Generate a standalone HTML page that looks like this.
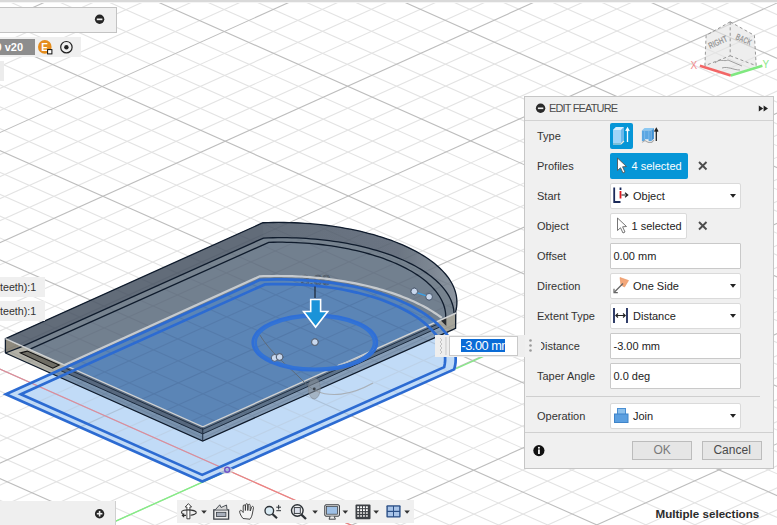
<!DOCTYPE html><html><head><meta charset="utf-8"><style>
html,body{margin:0;padding:0;width:777px;height:525px;overflow:hidden;background:#fff;font-family:"Liberation Sans",sans-serif;}
.abs{position:absolute}
.lbl{position:absolute;left:537px;font-size:11px;color:#333;white-space:nowrap;line-height:12px}
.txt{font-size:11px;color:#222;white-space:nowrap;line-height:12px}
.box{position:absolute;left:609.5px;width:131.8px;background:#fff;border:1px solid #dadada;border-radius:2px;box-sizing:border-box}
.inp{border-color:#c9c9c9;border-radius:1px}
.btn{position:absolute;top:441px;height:18.5px;box-sizing:border-box;background:#e6e6e6;border:1px solid #bcbcbc;font-size:12px;color:#7a7a7a;text-align:center;line-height:16px}
</style></head><body><svg width="777" height="525" viewBox="0 0 777 525" style="position:absolute;left:0;top:0"><g stroke="#e3e3e3" stroke-width="1.1"><line x1="-177.47" y1="-999.65" x2="3271.97" y2="532.24"/><line x1="-201.91" y1="-988.64" x2="3247.53" y2="543.25"/><line x1="-226.36" y1="-977.63" x2="3223.08" y2="554.26"/><line x1="-250.80" y1="-966.62" x2="3198.63" y2="565.27"/><line x1="-299.69" y1="-944.60" x2="3149.74" y2="587.29"/><line x1="-324.14" y1="-933.59" x2="3125.30" y2="598.30"/><line x1="-348.59" y1="-922.58" x2="3100.85" y2="609.31"/><line x1="-373.03" y1="-911.58" x2="3076.41" y2="620.31"/><line x1="-421.92" y1="-889.56" x2="3027.52" y2="642.33"/><line x1="-446.37" y1="-878.55" x2="3003.07" y2="653.34"/><line x1="-470.81" y1="-867.54" x2="2978.63" y2="664.35"/><line x1="-495.26" y1="-856.53" x2="2954.18" y2="675.36"/><line x1="-544.15" y1="-834.51" x2="2905.29" y2="697.38"/><line x1="-568.59" y1="-823.51" x2="2880.84" y2="708.38"/><line x1="-593.04" y1="-812.50" x2="2856.40" y2="719.39"/><line x1="-617.49" y1="-801.49" x2="2831.95" y2="730.40"/><line x1="-666.38" y1="-779.47" x2="2783.06" y2="752.42"/><line x1="-690.82" y1="-768.46" x2="2758.62" y2="763.43"/><line x1="-715.27" y1="-757.45" x2="2734.17" y2="774.44"/><line x1="-739.71" y1="-746.44" x2="2709.73" y2="785.45"/><line x1="-788.60" y1="-724.43" x2="2660.84" y2="807.46"/><line x1="-813.05" y1="-713.42" x2="2636.39" y2="818.47"/><line x1="-837.49" y1="-702.41" x2="2611.94" y2="829.48"/><line x1="-861.94" y1="-691.40" x2="2587.50" y2="840.49"/><line x1="-910.83" y1="-669.38" x2="2538.61" y2="862.51"/><line x1="-935.28" y1="-658.37" x2="2514.16" y2="873.52"/><line x1="-959.72" y1="-647.36" x2="2489.72" y2="884.53"/><line x1="-984.17" y1="-636.36" x2="2465.27" y2="895.53"/><line x1="-1033.06" y1="-614.34" x2="2416.38" y2="917.55"/><line x1="-1057.50" y1="-603.33" x2="2391.94" y2="928.56"/><line x1="-1081.95" y1="-592.32" x2="2367.49" y2="939.57"/><line x1="-1106.39" y1="-581.31" x2="2343.04" y2="950.58"/><line x1="-1155.28" y1="-559.29" x2="2294.15" y2="972.60"/><line x1="-1179.73" y1="-548.28" x2="2269.71" y2="983.61"/><line x1="-1204.18" y1="-537.28" x2="2245.26" y2="994.61"/><line x1="-1228.62" y1="-526.27" x2="2220.82" y2="1005.62"/><line x1="-1277.51" y1="-504.25" x2="2171.93" y2="1027.64"/><line x1="-1301.96" y1="-493.24" x2="2147.48" y2="1038.65"/><line x1="-1326.40" y1="-482.23" x2="2123.04" y2="1049.66"/><line x1="-1350.85" y1="-471.22" x2="2098.59" y2="1060.67"/><line x1="-1399.74" y1="-449.21" x2="2049.70" y2="1082.68"/><line x1="-1424.18" y1="-438.20" x2="2025.25" y2="1093.69"/><line x1="-1448.63" y1="-427.19" x2="2000.81" y2="1104.70"/><line x1="-1473.08" y1="-416.18" x2="1976.36" y2="1115.71"/><line x1="-1521.97" y1="-394.16" x2="1927.47" y2="1137.73"/><line x1="-1546.41" y1="-383.15" x2="1903.03" y2="1148.74"/><line x1="-1570.86" y1="-372.14" x2="1878.58" y2="1159.75"/><line x1="-1595.30" y1="-361.13" x2="1854.14" y2="1170.75"/><line x1="-1644.19" y1="-339.12" x2="1805.25" y2="1192.77"/><line x1="-1668.64" y1="-328.11" x2="1780.80" y2="1203.78"/><line x1="-1693.08" y1="-317.10" x2="1756.35" y2="1214.79"/><line x1="-1717.53" y1="-306.09" x2="1731.91" y2="1225.80"/><line x1="-1766.42" y1="-284.07" x2="1683.02" y2="1247.82"/><line x1="-1790.87" y1="-273.06" x2="1658.57" y2="1258.83"/><line x1="-1815.31" y1="-262.06" x2="1634.13" y2="1269.83"/><line x1="-1839.76" y1="-251.05" x2="1609.68" y2="1280.84"/><line x1="-1888.65" y1="-229.03" x2="1560.79" y2="1302.86"/><line x1="-1913.09" y1="-218.02" x2="1536.35" y2="1313.87"/><line x1="-1937.54" y1="-207.01" x2="1511.90" y2="1324.88"/><line x1="-1961.98" y1="-196.00" x2="1487.45" y2="1335.89"/><line x1="-2010.87" y1="-173.98" x2="1438.56" y2="1357.90"/><line x1="-2035.32" y1="-162.98" x2="1414.12" y2="1368.91"/><line x1="-2059.77" y1="-151.97" x2="1389.67" y2="1379.92"/><line x1="-2084.21" y1="-140.96" x2="1365.23" y2="1390.93"/><line x1="-2133.10" y1="-118.94" x2="1316.34" y2="1412.95"/><line x1="-2157.55" y1="-107.93" x2="1291.89" y2="1423.96"/><line x1="-2181.99" y1="-96.92" x2="1267.45" y2="1434.97"/><line x1="-2206.44" y1="-85.91" x2="1243.00" y2="1445.98"/><line x1="-2255.33" y1="-63.90" x2="1194.11" y2="1467.99"/><line x1="-2279.77" y1="-52.89" x2="1169.66" y2="1479.00"/><line x1="-2304.22" y1="-41.88" x2="1145.22" y2="1490.01"/><line x1="-2328.66" y1="-30.87" x2="1120.77" y2="1501.02"/><line x1="-2377.56" y1="-8.85" x2="1071.88" y2="1523.04"/><line x1="-2402.00" y1="2.16" x2="1047.44" y2="1534.05"/><line x1="-2426.45" y1="13.17" x2="1022.99" y2="1545.05"/><line x1="-2450.89" y1="24.17" x2="998.55" y2="1556.06"/><line x1="-2499.78" y1="46.19" x2="949.66" y2="1578.08"/><line x1="-2524.23" y1="57.20" x2="925.21" y2="1589.09"/><line x1="-2548.67" y1="68.21" x2="900.76" y2="1600.10"/><line x1="-2573.12" y1="79.22" x2="876.32" y2="1611.11"/><line x1="853.30" y1="-1001.05" x2="-2569.06" y2="540.19"/><line x1="877.94" y1="-990.11" x2="-2544.42" y2="551.13"/><line x1="902.58" y1="-979.16" x2="-2519.78" y2="562.07"/><line x1="927.22" y1="-968.22" x2="-2495.14" y2="573.01"/><line x1="976.50" y1="-946.34" x2="-2445.86" y2="594.90"/><line x1="1001.14" y1="-935.40" x2="-2421.22" y2="605.84"/><line x1="1025.77" y1="-924.45" x2="-2396.59" y2="616.78"/><line x1="1050.41" y1="-913.51" x2="-2371.95" y2="627.72"/><line x1="1099.69" y1="-891.63" x2="-2322.67" y2="649.61"/><line x1="1124.33" y1="-880.69" x2="-2298.03" y2="660.55"/><line x1="1148.97" y1="-869.74" x2="-2273.39" y2="671.49"/><line x1="1173.61" y1="-858.80" x2="-2248.75" y2="682.43"/><line x1="1222.88" y1="-836.92" x2="-2199.47" y2="704.32"/><line x1="1247.52" y1="-825.97" x2="-2174.84" y2="715.26"/><line x1="1272.16" y1="-815.03" x2="-2150.20" y2="726.20"/><line x1="1296.80" y1="-804.09" x2="-2125.56" y2="737.14"/><line x1="1346.08" y1="-782.21" x2="-2076.28" y2="759.03"/><line x1="1370.72" y1="-771.26" x2="-2051.64" y2="769.97"/><line x1="1395.36" y1="-760.32" x2="-2027.00" y2="780.91"/><line x1="1420.00" y1="-749.38" x2="-2002.36" y2="791.85"/><line x1="1469.27" y1="-727.50" x2="-1953.09" y2="813.74"/><line x1="1493.91" y1="-716.55" x2="-1928.45" y2="824.68"/><line x1="1518.55" y1="-705.61" x2="-1903.81" y2="835.62"/><line x1="1543.19" y1="-694.67" x2="-1879.17" y2="846.56"/><line x1="1592.47" y1="-672.79" x2="-1829.89" y2="868.45"/><line x1="1617.11" y1="-661.84" x2="-1805.25" y2="879.39"/><line x1="1641.75" y1="-650.90" x2="-1780.61" y2="890.33"/><line x1="1666.38" y1="-639.96" x2="-1755.98" y2="901.28"/><line x1="1715.66" y1="-618.08" x2="-1706.70" y2="923.16"/><line x1="1740.30" y1="-607.13" x2="-1682.06" y2="934.10"/><line x1="1764.94" y1="-596.19" x2="-1657.42" y2="945.04"/><line x1="1789.58" y1="-585.25" x2="-1632.78" y2="955.99"/><line x1="1838.86" y1="-563.37" x2="-1583.50" y2="977.87"/><line x1="1863.49" y1="-552.42" x2="-1558.86" y2="988.81"/><line x1="1888.13" y1="-541.48" x2="-1534.23" y2="999.75"/><line x1="1912.77" y1="-530.54" x2="-1509.59" y2="1010.70"/><line x1="1962.05" y1="-508.65" x2="-1460.31" y2="1032.58"/><line x1="1986.69" y1="-497.71" x2="-1435.67" y2="1043.52"/><line x1="2011.33" y1="-486.77" x2="-1411.03" y2="1054.46"/><line x1="2035.97" y1="-475.83" x2="-1386.39" y2="1065.41"/><line x1="2085.24" y1="-453.94" x2="-1337.12" y2="1087.29"/><line x1="2109.88" y1="-443.00" x2="-1312.48" y2="1098.23"/><line x1="2134.52" y1="-432.06" x2="-1287.84" y2="1109.17"/><line x1="2159.16" y1="-421.12" x2="-1263.20" y2="1120.12"/><line x1="2208.44" y1="-399.23" x2="-1213.92" y2="1142.00"/><line x1="2233.08" y1="-388.29" x2="-1189.28" y2="1152.94"/><line x1="2257.72" y1="-377.35" x2="-1164.64" y2="1163.88"/><line x1="2282.36" y1="-366.41" x2="-1140.00" y2="1174.83"/><line x1="2331.63" y1="-344.52" x2="-1090.73" y2="1196.71"/><line x1="2356.27" y1="-333.58" x2="-1066.09" y2="1207.65"/><line x1="2380.91" y1="-322.64" x2="-1041.45" y2="1218.60"/><line x1="2405.55" y1="-311.70" x2="-1016.81" y2="1229.54"/><line x1="2454.83" y1="-289.81" x2="-967.53" y2="1251.42"/><line x1="2479.47" y1="-278.87" x2="-942.89" y2="1262.36"/><line x1="2504.10" y1="-267.93" x2="-918.25" y2="1273.31"/><line x1="2528.74" y1="-256.99" x2="-893.62" y2="1284.25"/><line x1="2578.02" y1="-235.10" x2="-844.34" y2="1306.13"/><line x1="2602.66" y1="-224.16" x2="-819.70" y2="1317.07"/><line x1="2627.30" y1="-213.22" x2="-795.06" y2="1328.02"/><line x1="2651.94" y1="-202.28" x2="-770.42" y2="1338.96"/><line x1="2701.22" y1="-180.39" x2="-721.14" y2="1360.84"/><line x1="2725.85" y1="-169.45" x2="-696.51" y2="1371.78"/><line x1="2750.49" y1="-158.51" x2="-671.87" y2="1382.73"/><line x1="2775.13" y1="-147.57" x2="-647.23" y2="1393.67"/><line x1="2824.41" y1="-125.68" x2="-597.95" y2="1415.55"/><line x1="2849.05" y1="-114.74" x2="-573.31" y2="1426.49"/><line x1="2873.69" y1="-103.80" x2="-548.67" y2="1437.44"/><line x1="2898.33" y1="-92.86" x2="-524.03" y2="1448.38"/><line x1="2947.60" y1="-70.97" x2="-474.76" y2="1470.26"/><line x1="2972.24" y1="-60.03" x2="-450.12" y2="1481.20"/><line x1="2996.88" y1="-49.09" x2="-425.48" y2="1492.15"/><line x1="3021.52" y1="-38.15" x2="-400.84" y2="1503.09"/><line x1="3070.80" y1="-16.26" x2="-351.56" y2="1524.97"/><line x1="3095.44" y1="-5.32" x2="-326.92" y2="1535.92"/><line x1="3120.08" y1="5.62" x2="-302.28" y2="1546.86"/><line x1="3144.71" y1="16.56" x2="-277.64" y2="1557.80"/><line x1="3193.99" y1="38.45" x2="-228.37" y2="1579.68"/><line x1="3218.63" y1="49.39" x2="-203.73" y2="1590.63"/><line x1="3243.27" y1="60.33" x2="-179.09" y2="1601.57"/><line x1="3267.91" y1="71.27" x2="-154.45" y2="1612.51"/></g><g stroke="#bdbdbd" stroke-width="1.1"><line x1="-153.02" y1="-1010.66" x2="3296.42" y2="521.23"/><line x1="-275.25" y1="-955.61" x2="3174.19" y2="576.28"/><line x1="-397.48" y1="-900.57" x2="3051.96" y2="631.32"/><line x1="-519.70" y1="-845.52" x2="2929.74" y2="686.37"/><line x1="-641.93" y1="-790.48" x2="2807.51" y2="741.41"/><line x1="-764.16" y1="-735.43" x2="2685.28" y2="796.46"/><line x1="-886.38" y1="-680.39" x2="2563.05" y2="851.50"/><line x1="-1008.61" y1="-625.35" x2="2440.83" y2="906.54"/><line x1="-1130.84" y1="-570.30" x2="2318.60" y2="961.59"/><line x1="-1253.07" y1="-515.26" x2="2196.37" y2="1016.63"/><line x1="-1375.29" y1="-460.21" x2="2074.15" y2="1071.68"/><line x1="-1497.52" y1="-405.17" x2="1951.92" y2="1126.72"/><line x1="-1619.75" y1="-350.13" x2="1829.69" y2="1181.76"/><line x1="-1741.97" y1="-295.08" x2="1707.46" y2="1236.81"/><line x1="-1864.20" y1="-240.04" x2="1585.24" y2="1291.85"/><line x1="-1986.43" y1="-184.99" x2="1463.01" y2="1346.90"/><line x1="-2108.66" y1="-129.95" x2="1340.78" y2="1401.94"/><line x1="-2230.88" y1="-74.91" x2="1218.56" y2="1456.98"/><line x1="-2353.11" y1="-19.86" x2="1096.33" y2="1512.03"/><line x1="-2475.34" y1="35.18" x2="974.10" y2="1567.07"/><line x1="828.66" y1="-1011.99" x2="-2593.70" y2="529.24"/><line x1="951.86" y1="-957.28" x2="-2470.50" y2="583.95"/><line x1="1075.05" y1="-902.57" x2="-2347.31" y2="638.67"/><line x1="1198.25" y1="-847.86" x2="-2224.11" y2="693.38"/><line x1="1321.44" y1="-793.15" x2="-2100.92" y2="748.09"/><line x1="1444.63" y1="-738.44" x2="-1977.73" y2="802.80"/><line x1="1567.83" y1="-683.73" x2="-1854.53" y2="857.51"/><line x1="1691.02" y1="-629.02" x2="-1731.34" y2="912.22"/><line x1="1814.22" y1="-574.31" x2="-1608.14" y2="966.93"/><line x1="1937.41" y1="-519.60" x2="-1484.95" y2="1021.64"/><line x1="2060.61" y1="-464.89" x2="-1361.75" y2="1076.35"/><line x1="2183.80" y1="-410.18" x2="-1238.56" y2="1131.06"/><line x1="2306.99" y1="-355.47" x2="-1115.37" y2="1185.77"/><line x1="2430.19" y1="-300.76" x2="-992.17" y2="1240.48"/><line x1="2553.38" y1="-246.05" x2="-868.98" y2="1295.19"/><line x1="2676.58" y1="-191.33" x2="-745.78" y2="1349.90"/><line x1="2799.77" y1="-136.62" x2="-622.59" y2="1404.61"/><line x1="2922.97" y1="-81.91" x2="-499.39" y2="1459.32"/><line x1="3046.16" y1="-27.20" x2="-376.20" y2="1514.03"/><line x1="3169.35" y1="27.51" x2="-253.01" y2="1568.74"/></g><path d="M5.88,394.33 L202.25,481.54 L454.19,369.37 L455.06,365.83 L455.56,362.28 L455.70,358.72 L455.48,355.15 L454.90,351.59 L453.95,348.05 L452.65,344.53 L450.99,341.03 L448.98,337.57 L446.62,334.16 L443.92,330.77 L440.88,327.36 L437.50,324.02 L433.81,320.75 L429.79,317.56 L425.47,314.47 L420.85,311.47 L415.93,308.57 L410.74,305.78 L405.27,303.10 L399.55,300.55 L393.59,298.12 L387.38,295.82 L380.96,293.65 L374.33,291.63 L367.51,289.75 L360.50,288.04 L353.33,286.49 L346.01,285.07 L338.55,283.81 L330.98,282.71 L323.30,281.75 L315.53,280.96 L307.68,280.32 L299.79,279.84 L291.85,279.53 L283.89,279.37 L275.92,279.38 L267.96,279.55 L260.02,279.88 Z" fill="#c1dbf7"/><clipPath id="cD"><path d="M5.88,394.33 L202.25,481.54 L454.19,369.37 L455.06,365.83 L455.56,362.28 L455.70,358.72 L455.48,355.15 L454.90,351.59 L453.95,348.05 L452.65,344.53 L450.99,341.03 L448.98,337.57 L446.62,334.16 L443.92,330.77 L440.88,327.36 L437.50,324.02 L433.81,320.75 L429.79,317.56 L425.47,314.47 L420.85,311.47 L415.93,308.57 L410.74,305.78 L405.27,303.10 L399.55,300.55 L393.59,298.12 L387.38,295.82 L380.96,293.65 L374.33,291.63 L367.51,289.75 L360.50,288.04 L353.33,286.49 L346.01,285.07 L338.55,283.81 L330.98,282.71 L323.30,281.75 L315.53,280.96 L307.68,280.32 L299.79,279.84 L291.85,279.53 L283.89,279.37 L275.92,279.38 L267.96,279.55 L260.02,279.88 Z"/></clipPath><g clip-path="url(#cD)" opacity="0.5"><g stroke="#b8c8da" stroke-width="1.1"><line x1="-177.47" y1="-999.65" x2="3271.97" y2="532.24"/><line x1="-201.91" y1="-988.64" x2="3247.53" y2="543.25"/><line x1="-226.36" y1="-977.63" x2="3223.08" y2="554.26"/><line x1="-250.80" y1="-966.62" x2="3198.63" y2="565.27"/><line x1="-299.69" y1="-944.60" x2="3149.74" y2="587.29"/><line x1="-324.14" y1="-933.59" x2="3125.30" y2="598.30"/><line x1="-348.59" y1="-922.58" x2="3100.85" y2="609.31"/><line x1="-373.03" y1="-911.58" x2="3076.41" y2="620.31"/><line x1="-421.92" y1="-889.56" x2="3027.52" y2="642.33"/><line x1="-446.37" y1="-878.55" x2="3003.07" y2="653.34"/><line x1="-470.81" y1="-867.54" x2="2978.63" y2="664.35"/><line x1="-495.26" y1="-856.53" x2="2954.18" y2="675.36"/><line x1="-544.15" y1="-834.51" x2="2905.29" y2="697.38"/><line x1="-568.59" y1="-823.51" x2="2880.84" y2="708.38"/><line x1="-593.04" y1="-812.50" x2="2856.40" y2="719.39"/><line x1="-617.49" y1="-801.49" x2="2831.95" y2="730.40"/><line x1="-666.38" y1="-779.47" x2="2783.06" y2="752.42"/><line x1="-690.82" y1="-768.46" x2="2758.62" y2="763.43"/><line x1="-715.27" y1="-757.45" x2="2734.17" y2="774.44"/><line x1="-739.71" y1="-746.44" x2="2709.73" y2="785.45"/><line x1="-788.60" y1="-724.43" x2="2660.84" y2="807.46"/><line x1="-813.05" y1="-713.42" x2="2636.39" y2="818.47"/><line x1="-837.49" y1="-702.41" x2="2611.94" y2="829.48"/><line x1="-861.94" y1="-691.40" x2="2587.50" y2="840.49"/><line x1="-910.83" y1="-669.38" x2="2538.61" y2="862.51"/><line x1="-935.28" y1="-658.37" x2="2514.16" y2="873.52"/><line x1="-959.72" y1="-647.36" x2="2489.72" y2="884.53"/><line x1="-984.17" y1="-636.36" x2="2465.27" y2="895.53"/><line x1="-1033.06" y1="-614.34" x2="2416.38" y2="917.55"/><line x1="-1057.50" y1="-603.33" x2="2391.94" y2="928.56"/><line x1="-1081.95" y1="-592.32" x2="2367.49" y2="939.57"/><line x1="-1106.39" y1="-581.31" x2="2343.04" y2="950.58"/><line x1="-1155.28" y1="-559.29" x2="2294.15" y2="972.60"/><line x1="-1179.73" y1="-548.28" x2="2269.71" y2="983.61"/><line x1="-1204.18" y1="-537.28" x2="2245.26" y2="994.61"/><line x1="-1228.62" y1="-526.27" x2="2220.82" y2="1005.62"/><line x1="-1277.51" y1="-504.25" x2="2171.93" y2="1027.64"/><line x1="-1301.96" y1="-493.24" x2="2147.48" y2="1038.65"/><line x1="-1326.40" y1="-482.23" x2="2123.04" y2="1049.66"/><line x1="-1350.85" y1="-471.22" x2="2098.59" y2="1060.67"/><line x1="-1399.74" y1="-449.21" x2="2049.70" y2="1082.68"/><line x1="-1424.18" y1="-438.20" x2="2025.25" y2="1093.69"/><line x1="-1448.63" y1="-427.19" x2="2000.81" y2="1104.70"/><line x1="-1473.08" y1="-416.18" x2="1976.36" y2="1115.71"/><line x1="-1521.97" y1="-394.16" x2="1927.47" y2="1137.73"/><line x1="-1546.41" y1="-383.15" x2="1903.03" y2="1148.74"/><line x1="-1570.86" y1="-372.14" x2="1878.58" y2="1159.75"/><line x1="-1595.30" y1="-361.13" x2="1854.14" y2="1170.75"/><line x1="-1644.19" y1="-339.12" x2="1805.25" y2="1192.77"/><line x1="-1668.64" y1="-328.11" x2="1780.80" y2="1203.78"/><line x1="-1693.08" y1="-317.10" x2="1756.35" y2="1214.79"/><line x1="-1717.53" y1="-306.09" x2="1731.91" y2="1225.80"/><line x1="-1766.42" y1="-284.07" x2="1683.02" y2="1247.82"/><line x1="-1790.87" y1="-273.06" x2="1658.57" y2="1258.83"/><line x1="-1815.31" y1="-262.06" x2="1634.13" y2="1269.83"/><line x1="-1839.76" y1="-251.05" x2="1609.68" y2="1280.84"/><line x1="-1888.65" y1="-229.03" x2="1560.79" y2="1302.86"/><line x1="-1913.09" y1="-218.02" x2="1536.35" y2="1313.87"/><line x1="-1937.54" y1="-207.01" x2="1511.90" y2="1324.88"/><line x1="-1961.98" y1="-196.00" x2="1487.45" y2="1335.89"/><line x1="-2010.87" y1="-173.98" x2="1438.56" y2="1357.90"/><line x1="-2035.32" y1="-162.98" x2="1414.12" y2="1368.91"/><line x1="-2059.77" y1="-151.97" x2="1389.67" y2="1379.92"/><line x1="-2084.21" y1="-140.96" x2="1365.23" y2="1390.93"/><line x1="-2133.10" y1="-118.94" x2="1316.34" y2="1412.95"/><line x1="-2157.55" y1="-107.93" x2="1291.89" y2="1423.96"/><line x1="-2181.99" y1="-96.92" x2="1267.45" y2="1434.97"/><line x1="-2206.44" y1="-85.91" x2="1243.00" y2="1445.98"/><line x1="-2255.33" y1="-63.90" x2="1194.11" y2="1467.99"/><line x1="-2279.77" y1="-52.89" x2="1169.66" y2="1479.00"/><line x1="-2304.22" y1="-41.88" x2="1145.22" y2="1490.01"/><line x1="-2328.66" y1="-30.87" x2="1120.77" y2="1501.02"/><line x1="-2377.56" y1="-8.85" x2="1071.88" y2="1523.04"/><line x1="-2402.00" y1="2.16" x2="1047.44" y2="1534.05"/><line x1="-2426.45" y1="13.17" x2="1022.99" y2="1545.05"/><line x1="-2450.89" y1="24.17" x2="998.55" y2="1556.06"/><line x1="-2499.78" y1="46.19" x2="949.66" y2="1578.08"/><line x1="-2524.23" y1="57.20" x2="925.21" y2="1589.09"/><line x1="-2548.67" y1="68.21" x2="900.76" y2="1600.10"/><line x1="-2573.12" y1="79.22" x2="876.32" y2="1611.11"/><line x1="853.30" y1="-1001.05" x2="-2569.06" y2="540.19"/><line x1="877.94" y1="-990.11" x2="-2544.42" y2="551.13"/><line x1="902.58" y1="-979.16" x2="-2519.78" y2="562.07"/><line x1="927.22" y1="-968.22" x2="-2495.14" y2="573.01"/><line x1="976.50" y1="-946.34" x2="-2445.86" y2="594.90"/><line x1="1001.14" y1="-935.40" x2="-2421.22" y2="605.84"/><line x1="1025.77" y1="-924.45" x2="-2396.59" y2="616.78"/><line x1="1050.41" y1="-913.51" x2="-2371.95" y2="627.72"/><line x1="1099.69" y1="-891.63" x2="-2322.67" y2="649.61"/><line x1="1124.33" y1="-880.69" x2="-2298.03" y2="660.55"/><line x1="1148.97" y1="-869.74" x2="-2273.39" y2="671.49"/><line x1="1173.61" y1="-858.80" x2="-2248.75" y2="682.43"/><line x1="1222.88" y1="-836.92" x2="-2199.47" y2="704.32"/><line x1="1247.52" y1="-825.97" x2="-2174.84" y2="715.26"/><line x1="1272.16" y1="-815.03" x2="-2150.20" y2="726.20"/><line x1="1296.80" y1="-804.09" x2="-2125.56" y2="737.14"/><line x1="1346.08" y1="-782.21" x2="-2076.28" y2="759.03"/><line x1="1370.72" y1="-771.26" x2="-2051.64" y2="769.97"/><line x1="1395.36" y1="-760.32" x2="-2027.00" y2="780.91"/><line x1="1420.00" y1="-749.38" x2="-2002.36" y2="791.85"/><line x1="1469.27" y1="-727.50" x2="-1953.09" y2="813.74"/><line x1="1493.91" y1="-716.55" x2="-1928.45" y2="824.68"/><line x1="1518.55" y1="-705.61" x2="-1903.81" y2="835.62"/><line x1="1543.19" y1="-694.67" x2="-1879.17" y2="846.56"/><line x1="1592.47" y1="-672.79" x2="-1829.89" y2="868.45"/><line x1="1617.11" y1="-661.84" x2="-1805.25" y2="879.39"/><line x1="1641.75" y1="-650.90" x2="-1780.61" y2="890.33"/><line x1="1666.38" y1="-639.96" x2="-1755.98" y2="901.28"/><line x1="1715.66" y1="-618.08" x2="-1706.70" y2="923.16"/><line x1="1740.30" y1="-607.13" x2="-1682.06" y2="934.10"/><line x1="1764.94" y1="-596.19" x2="-1657.42" y2="945.04"/><line x1="1789.58" y1="-585.25" x2="-1632.78" y2="955.99"/><line x1="1838.86" y1="-563.37" x2="-1583.50" y2="977.87"/><line x1="1863.49" y1="-552.42" x2="-1558.86" y2="988.81"/><line x1="1888.13" y1="-541.48" x2="-1534.23" y2="999.75"/><line x1="1912.77" y1="-530.54" x2="-1509.59" y2="1010.70"/><line x1="1962.05" y1="-508.65" x2="-1460.31" y2="1032.58"/><line x1="1986.69" y1="-497.71" x2="-1435.67" y2="1043.52"/><line x1="2011.33" y1="-486.77" x2="-1411.03" y2="1054.46"/><line x1="2035.97" y1="-475.83" x2="-1386.39" y2="1065.41"/><line x1="2085.24" y1="-453.94" x2="-1337.12" y2="1087.29"/><line x1="2109.88" y1="-443.00" x2="-1312.48" y2="1098.23"/><line x1="2134.52" y1="-432.06" x2="-1287.84" y2="1109.17"/><line x1="2159.16" y1="-421.12" x2="-1263.20" y2="1120.12"/><line x1="2208.44" y1="-399.23" x2="-1213.92" y2="1142.00"/><line x1="2233.08" y1="-388.29" x2="-1189.28" y2="1152.94"/><line x1="2257.72" y1="-377.35" x2="-1164.64" y2="1163.88"/><line x1="2282.36" y1="-366.41" x2="-1140.00" y2="1174.83"/><line x1="2331.63" y1="-344.52" x2="-1090.73" y2="1196.71"/><line x1="2356.27" y1="-333.58" x2="-1066.09" y2="1207.65"/><line x1="2380.91" y1="-322.64" x2="-1041.45" y2="1218.60"/><line x1="2405.55" y1="-311.70" x2="-1016.81" y2="1229.54"/><line x1="2454.83" y1="-289.81" x2="-967.53" y2="1251.42"/><line x1="2479.47" y1="-278.87" x2="-942.89" y2="1262.36"/><line x1="2504.10" y1="-267.93" x2="-918.25" y2="1273.31"/><line x1="2528.74" y1="-256.99" x2="-893.62" y2="1284.25"/><line x1="2578.02" y1="-235.10" x2="-844.34" y2="1306.13"/><line x1="2602.66" y1="-224.16" x2="-819.70" y2="1317.07"/><line x1="2627.30" y1="-213.22" x2="-795.06" y2="1328.02"/><line x1="2651.94" y1="-202.28" x2="-770.42" y2="1338.96"/><line x1="2701.22" y1="-180.39" x2="-721.14" y2="1360.84"/><line x1="2725.85" y1="-169.45" x2="-696.51" y2="1371.78"/><line x1="2750.49" y1="-158.51" x2="-671.87" y2="1382.73"/><line x1="2775.13" y1="-147.57" x2="-647.23" y2="1393.67"/><line x1="2824.41" y1="-125.68" x2="-597.95" y2="1415.55"/><line x1="2849.05" y1="-114.74" x2="-573.31" y2="1426.49"/><line x1="2873.69" y1="-103.80" x2="-548.67" y2="1437.44"/><line x1="2898.33" y1="-92.86" x2="-524.03" y2="1448.38"/><line x1="2947.60" y1="-70.97" x2="-474.76" y2="1470.26"/><line x1="2972.24" y1="-60.03" x2="-450.12" y2="1481.20"/><line x1="2996.88" y1="-49.09" x2="-425.48" y2="1492.15"/><line x1="3021.52" y1="-38.15" x2="-400.84" y2="1503.09"/><line x1="3070.80" y1="-16.26" x2="-351.56" y2="1524.97"/><line x1="3095.44" y1="-5.32" x2="-326.92" y2="1535.92"/><line x1="3120.08" y1="5.62" x2="-302.28" y2="1546.86"/><line x1="3144.71" y1="16.56" x2="-277.64" y2="1557.80"/><line x1="3193.99" y1="38.45" x2="-228.37" y2="1579.68"/><line x1="3218.63" y1="49.39" x2="-203.73" y2="1590.63"/><line x1="3243.27" y1="60.33" x2="-179.09" y2="1601.57"/><line x1="3267.91" y1="71.27" x2="-154.45" y2="1612.51"/></g><g stroke="#9aaabc" stroke-width="1.1"><line x1="-153.02" y1="-1010.66" x2="3296.42" y2="521.23"/><line x1="-275.25" y1="-955.61" x2="3174.19" y2="576.28"/><line x1="-397.48" y1="-900.57" x2="3051.96" y2="631.32"/><line x1="-519.70" y1="-845.52" x2="2929.74" y2="686.37"/><line x1="-641.93" y1="-790.48" x2="2807.51" y2="741.41"/><line x1="-764.16" y1="-735.43" x2="2685.28" y2="796.46"/><line x1="-886.38" y1="-680.39" x2="2563.05" y2="851.50"/><line x1="-1008.61" y1="-625.35" x2="2440.83" y2="906.54"/><line x1="-1130.84" y1="-570.30" x2="2318.60" y2="961.59"/><line x1="-1253.07" y1="-515.26" x2="2196.37" y2="1016.63"/><line x1="-1375.29" y1="-460.21" x2="2074.15" y2="1071.68"/><line x1="-1497.52" y1="-405.17" x2="1951.92" y2="1126.72"/><line x1="-1619.75" y1="-350.13" x2="1829.69" y2="1181.76"/><line x1="-1741.97" y1="-295.08" x2="1707.46" y2="1236.81"/><line x1="-1864.20" y1="-240.04" x2="1585.24" y2="1291.85"/><line x1="-1986.43" y1="-184.99" x2="1463.01" y2="1346.90"/><line x1="-2108.66" y1="-129.95" x2="1340.78" y2="1401.94"/><line x1="-2230.88" y1="-74.91" x2="1218.56" y2="1456.98"/><line x1="-2353.11" y1="-19.86" x2="1096.33" y2="1512.03"/><line x1="-2475.34" y1="35.18" x2="974.10" y2="1567.07"/><line x1="828.66" y1="-1011.99" x2="-2593.70" y2="529.24"/><line x1="951.86" y1="-957.28" x2="-2470.50" y2="583.95"/><line x1="1075.05" y1="-902.57" x2="-2347.31" y2="638.67"/><line x1="1198.25" y1="-847.86" x2="-2224.11" y2="693.38"/><line x1="1321.44" y1="-793.15" x2="-2100.92" y2="748.09"/><line x1="1444.63" y1="-738.44" x2="-1977.73" y2="802.80"/><line x1="1567.83" y1="-683.73" x2="-1854.53" y2="857.51"/><line x1="1691.02" y1="-629.02" x2="-1731.34" y2="912.22"/><line x1="1814.22" y1="-574.31" x2="-1608.14" y2="966.93"/><line x1="1937.41" y1="-519.60" x2="-1484.95" y2="1021.64"/><line x1="2060.61" y1="-464.89" x2="-1361.75" y2="1076.35"/><line x1="2183.80" y1="-410.18" x2="-1238.56" y2="1131.06"/><line x1="2306.99" y1="-355.47" x2="-1115.37" y2="1185.77"/><line x1="2430.19" y1="-300.76" x2="-992.17" y2="1240.48"/><line x1="2553.38" y1="-246.05" x2="-868.98" y2="1295.19"/><line x1="2676.58" y1="-191.33" x2="-745.78" y2="1349.90"/><line x1="2799.77" y1="-136.62" x2="-622.59" y2="1404.61"/><line x1="2922.97" y1="-81.91" x2="-499.39" y2="1459.32"/><line x1="3046.16" y1="-27.20" x2="-376.20" y2="1514.03"/><line x1="3169.35" y1="27.51" x2="-253.01" y2="1568.74"/></g></g><line x1="228.17" y1="470.53" x2="1336.91" y2="962.92" stroke="#f08080" stroke-width="1.2"/><line x1="-387.81" y1="196.98" x2="228.17" y2="470.53" stroke="#e08a98" stroke-width="1.2"/><line x1="228.17" y1="470.53" x2="-260.74" y2="690.71" stroke="#84ee84" stroke-width="1.4"/><clipPath id="cS"><path d="M5.40,338.60 L262.87,222.76 L268.13,222.58 L273.39,222.48 L278.66,222.45 L283.94,222.48 L289.20,222.59 L294.46,222.77 L299.70,223.01 L304.93,223.33 L310.13,223.71 L315.30,224.16 L320.44,224.68 L325.55,225.27 L330.61,225.93 L335.63,226.65 L340.60,227.44 L345.52,228.29 L350.38,229.21 L355.17,230.19 L359.90,231.24 L364.55,232.34 L369.13,233.51 L373.64,234.74 L378.05,236.03 L382.39,237.37 L386.63,238.77 L390.77,240.23 L394.82,241.74 L398.77,243.31 L402.61,244.92 L406.35,246.59 L409.97,248.30 L413.48,250.06 L416.87,251.87 L420.13,253.72 L423.28,255.61 L426.30,257.55 L429.19,259.52 L431.94,261.53 L434.57,263.58 L437.05,265.66 L439.40,267.77 L441.61,269.91 L443.68,272.08 L445.60,274.27 L447.37,276.49 L449.00,278.74 L450.48,281.00 L451.81,283.28 L452.98,285.58 L454.01,287.89 L454.88,290.22 L455.60,292.56 L456.16,294.90 L456.56,297.25 L456.82,299.60 L456.91,301.96 L456.85,304.32 L456.64,306.67 L456.26,309.03 L455.74,311.37 L455.60,328.40 L449.00,331.30 L202.70,441.00 L5.40,353.00 Z"/></clipPath><g><path d="M5.40,338.60 L262.87,222.76 L268.13,222.58 L273.39,222.48 L278.66,222.45 L283.94,222.48 L289.20,222.59 L294.46,222.77 L299.70,223.01 L304.93,223.33 L310.13,223.71 L315.30,224.16 L320.44,224.68 L325.55,225.27 L330.61,225.93 L335.63,226.65 L340.60,227.44 L345.52,228.29 L350.38,229.21 L355.17,230.19 L359.90,231.24 L364.55,232.34 L369.13,233.51 L373.64,234.74 L378.05,236.03 L382.39,237.37 L386.63,238.77 L390.77,240.23 L394.82,241.74 L398.77,243.31 L402.61,244.92 L406.35,246.59 L409.97,248.30 L413.48,250.06 L416.87,251.87 L420.13,253.72 L423.28,255.61 L426.30,257.55 L429.19,259.52 L431.94,261.53 L434.57,263.58 L437.05,265.66 L439.40,267.77 L441.61,269.91 L443.68,272.08 L445.60,274.27 L447.37,276.49 L449.00,278.74 L450.48,281.00 L451.81,283.28 L452.98,285.58 L454.01,287.89 L454.88,290.22 L455.60,292.56 L456.16,294.90 L456.56,297.25 L456.82,299.60 L456.91,301.96 L456.85,304.32 L456.64,306.67 L456.26,309.03 L455.74,311.37 L455.60,328.40 L449.00,331.30 L202.70,441.00 L5.40,353.00 Z" fill="#73808f"/><path d="M5.40,338.60 L262.87,222.76 L268.13,222.58 L273.39,222.48 L278.66,222.45 L283.94,222.48 L289.20,222.59 L294.46,222.77 L299.70,223.01 L304.93,223.33 L310.13,223.71 L315.30,224.16 L320.44,224.68 L325.55,225.27 L330.61,225.93 L335.63,226.65 L340.60,227.44 L345.52,228.29 L350.38,229.21 L355.17,230.19 L359.90,231.24 L364.55,232.34 L369.13,233.51 L373.64,234.74 L378.05,236.03 L382.39,237.37 L386.63,238.77 L390.77,240.23 L394.82,241.74 L398.77,243.31 L402.61,244.92 L406.35,246.59 L409.97,248.30 L413.48,250.06 L416.87,251.87 L420.13,253.72 L423.28,255.61 L426.30,257.55 L429.19,259.52 L431.94,261.53 L434.57,263.58 L437.05,265.66 L439.40,267.77 L441.61,269.91 L443.68,272.08 L445.60,274.27 L447.37,276.49 L449.00,278.74 L450.48,281.00 L451.81,283.28 L452.98,285.58 L454.01,287.89 L454.88,290.22 L455.60,292.56 L456.16,294.90 L456.56,297.25 L456.82,299.60 L456.91,301.96 L456.85,304.32 L456.64,306.67 L456.26,309.03 L455.74,311.37 L454.03,313.00 L453.86,310.88 L453.55,308.76 L453.11,306.64 L452.54,304.53 L451.84,302.43 L451.01,300.34 L450.06,298.26 L448.97,296.19 L447.76,294.13 L446.42,292.10 L444.96,290.07 L443.38,288.07 L441.67,286.09 L439.84,284.13 L437.89,282.19 L435.82,280.28 L433.63,278.39 L431.33,276.53 L428.91,274.70 L426.38,272.90 L423.75,271.13 L421.00,269.40 L418.15,267.70 L415.20,266.03 L412.14,264.41 L408.99,262.82 L405.74,261.27 L402.39,259.76 L398.95,258.29 L395.43,256.86 L391.81,255.48 L388.12,254.15 L384.34,252.86 L380.49,251.62 L376.56,250.42 L372.55,249.27 L368.48,248.18 L364.34,247.13 L360.15,246.14 L355.89,245.20 L351.57,244.31 L347.20,243.47 L342.78,242.69 L338.32,241.96 L333.81,241.29 L329.26,240.68 L324.68,240.12 L320.06,239.61 L315.42,239.17 L310.75,238.78 L306.05,238.45 L301.34,238.17 L296.62,237.96 L291.88,237.80 L287.13,237.71 L282.38,237.67 L277.63,237.69 L272.89,237.76 L268.15,237.90 L263.42,238.09 L21.30,346.90 Z" fill="#626c79"/><linearGradient id="gA" gradientUnits="userSpaceOnUse" x1="262" y1="0" x2="457" y2="0"><stop offset="0" stop-color="#66707d"/><stop offset="0.7" stop-color="#6b7582"/><stop offset="1" stop-color="#8d96a1"/></linearGradient><path d="M262.87,222.76 L268.13,222.58 L273.39,222.48 L278.66,222.45 L283.94,222.48 L289.20,222.59 L294.46,222.77 L299.70,223.01 L304.93,223.33 L310.13,223.71 L315.30,224.16 L320.44,224.68 L325.55,225.27 L330.61,225.93 L335.63,226.65 L340.60,227.44 L345.52,228.29 L350.38,229.21 L355.17,230.19 L359.90,231.24 L364.55,232.34 L369.13,233.51 L373.64,234.74 L378.05,236.03 L382.39,237.37 L386.63,238.77 L390.77,240.23 L394.82,241.74 L398.77,243.31 L402.61,244.92 L406.35,246.59 L409.97,248.30 L413.48,250.06 L416.87,251.87 L420.13,253.72 L423.28,255.61 L426.30,257.55 L429.19,259.52 L431.94,261.53 L434.57,263.58 L437.05,265.66 L439.40,267.77 L441.61,269.91 L443.68,272.08 L445.60,274.27 L447.37,276.49 L449.00,278.74 L450.48,281.00 L451.81,283.28 L452.98,285.58 L454.01,287.89 L454.88,290.22 L455.60,292.56 L456.16,294.90 L456.56,297.25 L456.82,299.60 L456.91,301.96 L456.85,304.32 L456.64,306.67 L456.26,309.03 L455.74,311.37 L454.03,313.00 L453.86,310.88 L453.55,308.76 L453.11,306.64 L452.54,304.53 L451.84,302.43 L451.01,300.34 L450.06,298.26 L448.97,296.19 L447.76,294.13 L446.42,292.10 L444.96,290.07 L443.38,288.07 L441.67,286.09 L439.84,284.13 L437.89,282.19 L435.82,280.28 L433.63,278.39 L431.33,276.53 L428.91,274.70 L426.38,272.90 L423.75,271.13 L421.00,269.40 L418.15,267.70 L415.20,266.03 L412.14,264.41 L408.99,262.82 L405.74,261.27 L402.39,259.76 L398.95,258.29 L395.43,256.86 L391.81,255.48 L388.12,254.15 L384.34,252.86 L380.49,251.62 L376.56,250.42 L372.55,249.27 L368.48,248.18 L364.34,247.13 L360.15,246.14 L355.89,245.20 L351.57,244.31 L347.20,243.47 L342.78,242.69 L338.32,241.96 L333.81,241.29 L329.26,240.68 L324.68,240.12 L320.06,239.61 L315.42,239.17 L310.75,238.78 L306.05,238.45 L301.34,238.17 L296.62,237.96 L291.88,237.80 L287.13,237.71 L282.38,237.67 L277.63,237.69 L272.89,237.76 L268.15,237.90 L263.42,238.09 Z" fill="url(#gA)"/><path d="M21.30,346.90 L263.42,238.09 L268.15,237.90 L272.89,237.76 L277.63,237.69 L282.38,237.67 L287.13,237.71 L291.88,237.80 L296.62,237.96 L301.34,238.17 L306.05,238.45 L310.75,238.78 L315.42,239.17 L320.06,239.61 L324.68,240.12 L329.26,240.68 L333.81,241.29 L338.32,241.96 L342.78,242.69 L347.20,243.47 L351.57,244.31 L355.89,245.20 L360.15,246.14 L364.34,247.13 L368.48,248.18 L372.55,249.27 L376.56,250.42 L380.49,251.62 L384.34,252.86 L388.12,254.15 L391.81,255.48 L395.43,256.86 L398.95,258.29 L402.39,259.76 L405.74,261.27 L408.99,262.82 L412.14,264.41 L415.20,266.03 L418.15,267.70 L421.00,269.40 L423.75,271.13 L426.38,272.90 L428.91,274.70 L431.33,276.53 L433.63,278.39 L435.82,280.28 L437.89,282.19 L439.84,284.13 L441.67,286.09 L443.38,288.07 L444.96,290.07 L446.42,292.10 L447.76,294.13 L448.97,296.19 L450.06,298.26 L451.01,300.34 L451.84,302.43 L452.54,304.53 L453.11,306.64 L453.55,308.76 L453.86,310.88 L454.03,313.00 L445.71,317.10 L445.69,315.06 L445.54,313.03 L445.26,311.00 L444.86,308.97 L444.34,306.95 L443.69,304.93 L442.92,302.93 L442.03,300.93 L441.01,298.94 L439.88,296.97 L438.62,295.02 L437.24,293.08 L435.75,291.15 L434.14,289.25 L432.41,287.37 L430.57,285.50 L428.61,283.66 L426.54,281.85 L424.36,280.06 L422.08,278.30 L419.68,276.57 L417.18,274.87 L414.58,273.20 L411.87,271.56 L409.07,269.96 L406.17,268.39 L403.17,266.85 L400.08,265.36 L396.90,263.90 L393.64,262.48 L390.28,261.10 L386.85,259.77 L383.33,258.47 L379.73,257.23 L376.06,256.02 L372.32,254.86 L368.51,253.75 L364.63,252.68 L360.69,251.66 L356.68,250.69 L352.62,249.77 L348.51,248.90 L344.34,248.08 L340.12,247.31 L335.86,246.60 L331.56,245.94 L327.21,245.33 L322.84,244.77 L318.42,244.27 L313.98,243.82 L309.52,243.42 L305.03,243.08 L300.52,242.80 L296.00,242.57 L291.46,242.40 L286.92,242.28 L282.37,242.22 L277.82,242.21 L273.27,242.26 L268.72,242.37 L30.60,348.80 Z" fill="#77838f"/><path d="M5.40,338.60 L202.80,426.80 L202.70,441.00 L5.40,353.00 Z" fill="#b3b1a8"/><path d="M202.80,426.80 L456.30,313.00 L449.00,331.30 L202.70,441.00 Z" fill="#a9a89f"/><path d="M5.4,338.6 L21.3,346.9 L5.4,353 Z" fill="#8e8a7e"/><path d="M20.4,352.9 L27.3,351.1 L59.3,365 L52.8,368.2 Z" fill="#6f6d65" stroke="#141414" stroke-width="1.1"/><path d="M446.3,317.1 L456.3,313.0 L456.0,326.5 L452.5,330.3 L449.0,331.3 L446.3,327.5 Z" fill="#a6a59b"/><path d="M440.6,320.2 L446.3,317.6 L446.3,326 Z" fill="#2a2c30"/></g><g clip-path="url(#cS)" opacity="0.09"><g stroke="#303a48" stroke-width="1.1"><line x1="-177.47" y1="-999.65" x2="3271.97" y2="532.24"/><line x1="-201.91" y1="-988.64" x2="3247.53" y2="543.25"/><line x1="-226.36" y1="-977.63" x2="3223.08" y2="554.26"/><line x1="-250.80" y1="-966.62" x2="3198.63" y2="565.27"/><line x1="-299.69" y1="-944.60" x2="3149.74" y2="587.29"/><line x1="-324.14" y1="-933.59" x2="3125.30" y2="598.30"/><line x1="-348.59" y1="-922.58" x2="3100.85" y2="609.31"/><line x1="-373.03" y1="-911.58" x2="3076.41" y2="620.31"/><line x1="-421.92" y1="-889.56" x2="3027.52" y2="642.33"/><line x1="-446.37" y1="-878.55" x2="3003.07" y2="653.34"/><line x1="-470.81" y1="-867.54" x2="2978.63" y2="664.35"/><line x1="-495.26" y1="-856.53" x2="2954.18" y2="675.36"/><line x1="-544.15" y1="-834.51" x2="2905.29" y2="697.38"/><line x1="-568.59" y1="-823.51" x2="2880.84" y2="708.38"/><line x1="-593.04" y1="-812.50" x2="2856.40" y2="719.39"/><line x1="-617.49" y1="-801.49" x2="2831.95" y2="730.40"/><line x1="-666.38" y1="-779.47" x2="2783.06" y2="752.42"/><line x1="-690.82" y1="-768.46" x2="2758.62" y2="763.43"/><line x1="-715.27" y1="-757.45" x2="2734.17" y2="774.44"/><line x1="-739.71" y1="-746.44" x2="2709.73" y2="785.45"/><line x1="-788.60" y1="-724.43" x2="2660.84" y2="807.46"/><line x1="-813.05" y1="-713.42" x2="2636.39" y2="818.47"/><line x1="-837.49" y1="-702.41" x2="2611.94" y2="829.48"/><line x1="-861.94" y1="-691.40" x2="2587.50" y2="840.49"/><line x1="-910.83" y1="-669.38" x2="2538.61" y2="862.51"/><line x1="-935.28" y1="-658.37" x2="2514.16" y2="873.52"/><line x1="-959.72" y1="-647.36" x2="2489.72" y2="884.53"/><line x1="-984.17" y1="-636.36" x2="2465.27" y2="895.53"/><line x1="-1033.06" y1="-614.34" x2="2416.38" y2="917.55"/><line x1="-1057.50" y1="-603.33" x2="2391.94" y2="928.56"/><line x1="-1081.95" y1="-592.32" x2="2367.49" y2="939.57"/><line x1="-1106.39" y1="-581.31" x2="2343.04" y2="950.58"/><line x1="-1155.28" y1="-559.29" x2="2294.15" y2="972.60"/><line x1="-1179.73" y1="-548.28" x2="2269.71" y2="983.61"/><line x1="-1204.18" y1="-537.28" x2="2245.26" y2="994.61"/><line x1="-1228.62" y1="-526.27" x2="2220.82" y2="1005.62"/><line x1="-1277.51" y1="-504.25" x2="2171.93" y2="1027.64"/><line x1="-1301.96" y1="-493.24" x2="2147.48" y2="1038.65"/><line x1="-1326.40" y1="-482.23" x2="2123.04" y2="1049.66"/><line x1="-1350.85" y1="-471.22" x2="2098.59" y2="1060.67"/><line x1="-1399.74" y1="-449.21" x2="2049.70" y2="1082.68"/><line x1="-1424.18" y1="-438.20" x2="2025.25" y2="1093.69"/><line x1="-1448.63" y1="-427.19" x2="2000.81" y2="1104.70"/><line x1="-1473.08" y1="-416.18" x2="1976.36" y2="1115.71"/><line x1="-1521.97" y1="-394.16" x2="1927.47" y2="1137.73"/><line x1="-1546.41" y1="-383.15" x2="1903.03" y2="1148.74"/><line x1="-1570.86" y1="-372.14" x2="1878.58" y2="1159.75"/><line x1="-1595.30" y1="-361.13" x2="1854.14" y2="1170.75"/><line x1="-1644.19" y1="-339.12" x2="1805.25" y2="1192.77"/><line x1="-1668.64" y1="-328.11" x2="1780.80" y2="1203.78"/><line x1="-1693.08" y1="-317.10" x2="1756.35" y2="1214.79"/><line x1="-1717.53" y1="-306.09" x2="1731.91" y2="1225.80"/><line x1="-1766.42" y1="-284.07" x2="1683.02" y2="1247.82"/><line x1="-1790.87" y1="-273.06" x2="1658.57" y2="1258.83"/><line x1="-1815.31" y1="-262.06" x2="1634.13" y2="1269.83"/><line x1="-1839.76" y1="-251.05" x2="1609.68" y2="1280.84"/><line x1="-1888.65" y1="-229.03" x2="1560.79" y2="1302.86"/><line x1="-1913.09" y1="-218.02" x2="1536.35" y2="1313.87"/><line x1="-1937.54" y1="-207.01" x2="1511.90" y2="1324.88"/><line x1="-1961.98" y1="-196.00" x2="1487.45" y2="1335.89"/><line x1="-2010.87" y1="-173.98" x2="1438.56" y2="1357.90"/><line x1="-2035.32" y1="-162.98" x2="1414.12" y2="1368.91"/><line x1="-2059.77" y1="-151.97" x2="1389.67" y2="1379.92"/><line x1="-2084.21" y1="-140.96" x2="1365.23" y2="1390.93"/><line x1="-2133.10" y1="-118.94" x2="1316.34" y2="1412.95"/><line x1="-2157.55" y1="-107.93" x2="1291.89" y2="1423.96"/><line x1="-2181.99" y1="-96.92" x2="1267.45" y2="1434.97"/><line x1="-2206.44" y1="-85.91" x2="1243.00" y2="1445.98"/><line x1="-2255.33" y1="-63.90" x2="1194.11" y2="1467.99"/><line x1="-2279.77" y1="-52.89" x2="1169.66" y2="1479.00"/><line x1="-2304.22" y1="-41.88" x2="1145.22" y2="1490.01"/><line x1="-2328.66" y1="-30.87" x2="1120.77" y2="1501.02"/><line x1="-2377.56" y1="-8.85" x2="1071.88" y2="1523.04"/><line x1="-2402.00" y1="2.16" x2="1047.44" y2="1534.05"/><line x1="-2426.45" y1="13.17" x2="1022.99" y2="1545.05"/><line x1="-2450.89" y1="24.17" x2="998.55" y2="1556.06"/><line x1="-2499.78" y1="46.19" x2="949.66" y2="1578.08"/><line x1="-2524.23" y1="57.20" x2="925.21" y2="1589.09"/><line x1="-2548.67" y1="68.21" x2="900.76" y2="1600.10"/><line x1="-2573.12" y1="79.22" x2="876.32" y2="1611.11"/><line x1="853.30" y1="-1001.05" x2="-2569.06" y2="540.19"/><line x1="877.94" y1="-990.11" x2="-2544.42" y2="551.13"/><line x1="902.58" y1="-979.16" x2="-2519.78" y2="562.07"/><line x1="927.22" y1="-968.22" x2="-2495.14" y2="573.01"/><line x1="976.50" y1="-946.34" x2="-2445.86" y2="594.90"/><line x1="1001.14" y1="-935.40" x2="-2421.22" y2="605.84"/><line x1="1025.77" y1="-924.45" x2="-2396.59" y2="616.78"/><line x1="1050.41" y1="-913.51" x2="-2371.95" y2="627.72"/><line x1="1099.69" y1="-891.63" x2="-2322.67" y2="649.61"/><line x1="1124.33" y1="-880.69" x2="-2298.03" y2="660.55"/><line x1="1148.97" y1="-869.74" x2="-2273.39" y2="671.49"/><line x1="1173.61" y1="-858.80" x2="-2248.75" y2="682.43"/><line x1="1222.88" y1="-836.92" x2="-2199.47" y2="704.32"/><line x1="1247.52" y1="-825.97" x2="-2174.84" y2="715.26"/><line x1="1272.16" y1="-815.03" x2="-2150.20" y2="726.20"/><line x1="1296.80" y1="-804.09" x2="-2125.56" y2="737.14"/><line x1="1346.08" y1="-782.21" x2="-2076.28" y2="759.03"/><line x1="1370.72" y1="-771.26" x2="-2051.64" y2="769.97"/><line x1="1395.36" y1="-760.32" x2="-2027.00" y2="780.91"/><line x1="1420.00" y1="-749.38" x2="-2002.36" y2="791.85"/><line x1="1469.27" y1="-727.50" x2="-1953.09" y2="813.74"/><line x1="1493.91" y1="-716.55" x2="-1928.45" y2="824.68"/><line x1="1518.55" y1="-705.61" x2="-1903.81" y2="835.62"/><line x1="1543.19" y1="-694.67" x2="-1879.17" y2="846.56"/><line x1="1592.47" y1="-672.79" x2="-1829.89" y2="868.45"/><line x1="1617.11" y1="-661.84" x2="-1805.25" y2="879.39"/><line x1="1641.75" y1="-650.90" x2="-1780.61" y2="890.33"/><line x1="1666.38" y1="-639.96" x2="-1755.98" y2="901.28"/><line x1="1715.66" y1="-618.08" x2="-1706.70" y2="923.16"/><line x1="1740.30" y1="-607.13" x2="-1682.06" y2="934.10"/><line x1="1764.94" y1="-596.19" x2="-1657.42" y2="945.04"/><line x1="1789.58" y1="-585.25" x2="-1632.78" y2="955.99"/><line x1="1838.86" y1="-563.37" x2="-1583.50" y2="977.87"/><line x1="1863.49" y1="-552.42" x2="-1558.86" y2="988.81"/><line x1="1888.13" y1="-541.48" x2="-1534.23" y2="999.75"/><line x1="1912.77" y1="-530.54" x2="-1509.59" y2="1010.70"/><line x1="1962.05" y1="-508.65" x2="-1460.31" y2="1032.58"/><line x1="1986.69" y1="-497.71" x2="-1435.67" y2="1043.52"/><line x1="2011.33" y1="-486.77" x2="-1411.03" y2="1054.46"/><line x1="2035.97" y1="-475.83" x2="-1386.39" y2="1065.41"/><line x1="2085.24" y1="-453.94" x2="-1337.12" y2="1087.29"/><line x1="2109.88" y1="-443.00" x2="-1312.48" y2="1098.23"/><line x1="2134.52" y1="-432.06" x2="-1287.84" y2="1109.17"/><line x1="2159.16" y1="-421.12" x2="-1263.20" y2="1120.12"/><line x1="2208.44" y1="-399.23" x2="-1213.92" y2="1142.00"/><line x1="2233.08" y1="-388.29" x2="-1189.28" y2="1152.94"/><line x1="2257.72" y1="-377.35" x2="-1164.64" y2="1163.88"/><line x1="2282.36" y1="-366.41" x2="-1140.00" y2="1174.83"/><line x1="2331.63" y1="-344.52" x2="-1090.73" y2="1196.71"/><line x1="2356.27" y1="-333.58" x2="-1066.09" y2="1207.65"/><line x1="2380.91" y1="-322.64" x2="-1041.45" y2="1218.60"/><line x1="2405.55" y1="-311.70" x2="-1016.81" y2="1229.54"/><line x1="2454.83" y1="-289.81" x2="-967.53" y2="1251.42"/><line x1="2479.47" y1="-278.87" x2="-942.89" y2="1262.36"/><line x1="2504.10" y1="-267.93" x2="-918.25" y2="1273.31"/><line x1="2528.74" y1="-256.99" x2="-893.62" y2="1284.25"/><line x1="2578.02" y1="-235.10" x2="-844.34" y2="1306.13"/><line x1="2602.66" y1="-224.16" x2="-819.70" y2="1317.07"/><line x1="2627.30" y1="-213.22" x2="-795.06" y2="1328.02"/><line x1="2651.94" y1="-202.28" x2="-770.42" y2="1338.96"/><line x1="2701.22" y1="-180.39" x2="-721.14" y2="1360.84"/><line x1="2725.85" y1="-169.45" x2="-696.51" y2="1371.78"/><line x1="2750.49" y1="-158.51" x2="-671.87" y2="1382.73"/><line x1="2775.13" y1="-147.57" x2="-647.23" y2="1393.67"/><line x1="2824.41" y1="-125.68" x2="-597.95" y2="1415.55"/><line x1="2849.05" y1="-114.74" x2="-573.31" y2="1426.49"/><line x1="2873.69" y1="-103.80" x2="-548.67" y2="1437.44"/><line x1="2898.33" y1="-92.86" x2="-524.03" y2="1448.38"/><line x1="2947.60" y1="-70.97" x2="-474.76" y2="1470.26"/><line x1="2972.24" y1="-60.03" x2="-450.12" y2="1481.20"/><line x1="2996.88" y1="-49.09" x2="-425.48" y2="1492.15"/><line x1="3021.52" y1="-38.15" x2="-400.84" y2="1503.09"/><line x1="3070.80" y1="-16.26" x2="-351.56" y2="1524.97"/><line x1="3095.44" y1="-5.32" x2="-326.92" y2="1535.92"/><line x1="3120.08" y1="5.62" x2="-302.28" y2="1546.86"/><line x1="3144.71" y1="16.56" x2="-277.64" y2="1557.80"/><line x1="3193.99" y1="38.45" x2="-228.37" y2="1579.68"/><line x1="3218.63" y1="49.39" x2="-203.73" y2="1590.63"/><line x1="3243.27" y1="60.33" x2="-179.09" y2="1601.57"/><line x1="3267.91" y1="71.27" x2="-154.45" y2="1612.51"/></g><g stroke="#202a38" stroke-width="1.1"><line x1="-153.02" y1="-1010.66" x2="3296.42" y2="521.23"/><line x1="-275.25" y1="-955.61" x2="3174.19" y2="576.28"/><line x1="-397.48" y1="-900.57" x2="3051.96" y2="631.32"/><line x1="-519.70" y1="-845.52" x2="2929.74" y2="686.37"/><line x1="-641.93" y1="-790.48" x2="2807.51" y2="741.41"/><line x1="-764.16" y1="-735.43" x2="2685.28" y2="796.46"/><line x1="-886.38" y1="-680.39" x2="2563.05" y2="851.50"/><line x1="-1008.61" y1="-625.35" x2="2440.83" y2="906.54"/><line x1="-1130.84" y1="-570.30" x2="2318.60" y2="961.59"/><line x1="-1253.07" y1="-515.26" x2="2196.37" y2="1016.63"/><line x1="-1375.29" y1="-460.21" x2="2074.15" y2="1071.68"/><line x1="-1497.52" y1="-405.17" x2="1951.92" y2="1126.72"/><line x1="-1619.75" y1="-350.13" x2="1829.69" y2="1181.76"/><line x1="-1741.97" y1="-295.08" x2="1707.46" y2="1236.81"/><line x1="-1864.20" y1="-240.04" x2="1585.24" y2="1291.85"/><line x1="-1986.43" y1="-184.99" x2="1463.01" y2="1346.90"/><line x1="-2108.66" y1="-129.95" x2="1340.78" y2="1401.94"/><line x1="-2230.88" y1="-74.91" x2="1218.56" y2="1456.98"/><line x1="-2353.11" y1="-19.86" x2="1096.33" y2="1512.03"/><line x1="-2475.34" y1="35.18" x2="974.10" y2="1567.07"/><line x1="828.66" y1="-1011.99" x2="-2593.70" y2="529.24"/><line x1="951.86" y1="-957.28" x2="-2470.50" y2="583.95"/><line x1="1075.05" y1="-902.57" x2="-2347.31" y2="638.67"/><line x1="1198.25" y1="-847.86" x2="-2224.11" y2="693.38"/><line x1="1321.44" y1="-793.15" x2="-2100.92" y2="748.09"/><line x1="1444.63" y1="-738.44" x2="-1977.73" y2="802.80"/><line x1="1567.83" y1="-683.73" x2="-1854.53" y2="857.51"/><line x1="1691.02" y1="-629.02" x2="-1731.34" y2="912.22"/><line x1="1814.22" y1="-574.31" x2="-1608.14" y2="966.93"/><line x1="1937.41" y1="-519.60" x2="-1484.95" y2="1021.64"/><line x1="2060.61" y1="-464.89" x2="-1361.75" y2="1076.35"/><line x1="2183.80" y1="-410.18" x2="-1238.56" y2="1131.06"/><line x1="2306.99" y1="-355.47" x2="-1115.37" y2="1185.77"/><line x1="2430.19" y1="-300.76" x2="-992.17" y2="1240.48"/><line x1="2553.38" y1="-246.05" x2="-868.98" y2="1295.19"/><line x1="2676.58" y1="-191.33" x2="-745.78" y2="1349.90"/><line x1="2799.77" y1="-136.62" x2="-622.59" y2="1404.61"/><line x1="2922.97" y1="-81.91" x2="-499.39" y2="1459.32"/><line x1="3046.16" y1="-27.20" x2="-376.20" y2="1514.03"/><line x1="3169.35" y1="27.51" x2="-253.01" y2="1568.74"/></g></g><g clip-path="url(#cD)"><g clip-path="url(#cS)"><path d="M5.40,338.60 L262.87,222.76 L268.13,222.58 L273.39,222.48 L278.66,222.45 L283.94,222.48 L289.20,222.59 L294.46,222.77 L299.70,223.01 L304.93,223.33 L310.13,223.71 L315.30,224.16 L320.44,224.68 L325.55,225.27 L330.61,225.93 L335.63,226.65 L340.60,227.44 L345.52,228.29 L350.38,229.21 L355.17,230.19 L359.90,231.24 L364.55,232.34 L369.13,233.51 L373.64,234.74 L378.05,236.03 L382.39,237.37 L386.63,238.77 L390.77,240.23 L394.82,241.74 L398.77,243.31 L402.61,244.92 L406.35,246.59 L409.97,248.30 L413.48,250.06 L416.87,251.87 L420.13,253.72 L423.28,255.61 L426.30,257.55 L429.19,259.52 L431.94,261.53 L434.57,263.58 L437.05,265.66 L439.40,267.77 L441.61,269.91 L443.68,272.08 L445.60,274.27 L447.37,276.49 L449.00,278.74 L450.48,281.00 L451.81,283.28 L452.98,285.58 L454.01,287.89 L454.88,290.22 L455.60,292.56 L456.16,294.90 L456.56,297.25 L456.82,299.60 L456.91,301.96 L456.85,304.32 L456.64,306.67 L456.26,309.03 L455.74,311.37 L455.60,328.40 L449.00,331.30 L202.70,441.00 L5.40,353.00 Z" fill="#5b85b7"/><path d="M5.40,338.60 L202.80,426.80 L202.75,433.90 L5.40,345.90 Z" fill="#58697e"/><path d="M5.40,345.90 L202.75,433.90 L202.70,441.00 L5.40,353.00 Z" fill="#7a92ad"/><path d="M202.80,426.80 L456.30,313.00 L454.50,320.40 L202.75,433.90 Z" fill="#5e7288"/><path d="M202.75,433.90 L454.50,320.40 L449.00,331.30 L202.70,441.00 Z" fill="#859db7"/><g opacity="0.11"><g stroke="#203050" stroke-width="1.1"><line x1="-177.47" y1="-999.65" x2="3271.97" y2="532.24"/><line x1="-201.91" y1="-988.64" x2="3247.53" y2="543.25"/><line x1="-226.36" y1="-977.63" x2="3223.08" y2="554.26"/><line x1="-250.80" y1="-966.62" x2="3198.63" y2="565.27"/><line x1="-299.69" y1="-944.60" x2="3149.74" y2="587.29"/><line x1="-324.14" y1="-933.59" x2="3125.30" y2="598.30"/><line x1="-348.59" y1="-922.58" x2="3100.85" y2="609.31"/><line x1="-373.03" y1="-911.58" x2="3076.41" y2="620.31"/><line x1="-421.92" y1="-889.56" x2="3027.52" y2="642.33"/><line x1="-446.37" y1="-878.55" x2="3003.07" y2="653.34"/><line x1="-470.81" y1="-867.54" x2="2978.63" y2="664.35"/><line x1="-495.26" y1="-856.53" x2="2954.18" y2="675.36"/><line x1="-544.15" y1="-834.51" x2="2905.29" y2="697.38"/><line x1="-568.59" y1="-823.51" x2="2880.84" y2="708.38"/><line x1="-593.04" y1="-812.50" x2="2856.40" y2="719.39"/><line x1="-617.49" y1="-801.49" x2="2831.95" y2="730.40"/><line x1="-666.38" y1="-779.47" x2="2783.06" y2="752.42"/><line x1="-690.82" y1="-768.46" x2="2758.62" y2="763.43"/><line x1="-715.27" y1="-757.45" x2="2734.17" y2="774.44"/><line x1="-739.71" y1="-746.44" x2="2709.73" y2="785.45"/><line x1="-788.60" y1="-724.43" x2="2660.84" y2="807.46"/><line x1="-813.05" y1="-713.42" x2="2636.39" y2="818.47"/><line x1="-837.49" y1="-702.41" x2="2611.94" y2="829.48"/><line x1="-861.94" y1="-691.40" x2="2587.50" y2="840.49"/><line x1="-910.83" y1="-669.38" x2="2538.61" y2="862.51"/><line x1="-935.28" y1="-658.37" x2="2514.16" y2="873.52"/><line x1="-959.72" y1="-647.36" x2="2489.72" y2="884.53"/><line x1="-984.17" y1="-636.36" x2="2465.27" y2="895.53"/><line x1="-1033.06" y1="-614.34" x2="2416.38" y2="917.55"/><line x1="-1057.50" y1="-603.33" x2="2391.94" y2="928.56"/><line x1="-1081.95" y1="-592.32" x2="2367.49" y2="939.57"/><line x1="-1106.39" y1="-581.31" x2="2343.04" y2="950.58"/><line x1="-1155.28" y1="-559.29" x2="2294.15" y2="972.60"/><line x1="-1179.73" y1="-548.28" x2="2269.71" y2="983.61"/><line x1="-1204.18" y1="-537.28" x2="2245.26" y2="994.61"/><line x1="-1228.62" y1="-526.27" x2="2220.82" y2="1005.62"/><line x1="-1277.51" y1="-504.25" x2="2171.93" y2="1027.64"/><line x1="-1301.96" y1="-493.24" x2="2147.48" y2="1038.65"/><line x1="-1326.40" y1="-482.23" x2="2123.04" y2="1049.66"/><line x1="-1350.85" y1="-471.22" x2="2098.59" y2="1060.67"/><line x1="-1399.74" y1="-449.21" x2="2049.70" y2="1082.68"/><line x1="-1424.18" y1="-438.20" x2="2025.25" y2="1093.69"/><line x1="-1448.63" y1="-427.19" x2="2000.81" y2="1104.70"/><line x1="-1473.08" y1="-416.18" x2="1976.36" y2="1115.71"/><line x1="-1521.97" y1="-394.16" x2="1927.47" y2="1137.73"/><line x1="-1546.41" y1="-383.15" x2="1903.03" y2="1148.74"/><line x1="-1570.86" y1="-372.14" x2="1878.58" y2="1159.75"/><line x1="-1595.30" y1="-361.13" x2="1854.14" y2="1170.75"/><line x1="-1644.19" y1="-339.12" x2="1805.25" y2="1192.77"/><line x1="-1668.64" y1="-328.11" x2="1780.80" y2="1203.78"/><line x1="-1693.08" y1="-317.10" x2="1756.35" y2="1214.79"/><line x1="-1717.53" y1="-306.09" x2="1731.91" y2="1225.80"/><line x1="-1766.42" y1="-284.07" x2="1683.02" y2="1247.82"/><line x1="-1790.87" y1="-273.06" x2="1658.57" y2="1258.83"/><line x1="-1815.31" y1="-262.06" x2="1634.13" y2="1269.83"/><line x1="-1839.76" y1="-251.05" x2="1609.68" y2="1280.84"/><line x1="-1888.65" y1="-229.03" x2="1560.79" y2="1302.86"/><line x1="-1913.09" y1="-218.02" x2="1536.35" y2="1313.87"/><line x1="-1937.54" y1="-207.01" x2="1511.90" y2="1324.88"/><line x1="-1961.98" y1="-196.00" x2="1487.45" y2="1335.89"/><line x1="-2010.87" y1="-173.98" x2="1438.56" y2="1357.90"/><line x1="-2035.32" y1="-162.98" x2="1414.12" y2="1368.91"/><line x1="-2059.77" y1="-151.97" x2="1389.67" y2="1379.92"/><line x1="-2084.21" y1="-140.96" x2="1365.23" y2="1390.93"/><line x1="-2133.10" y1="-118.94" x2="1316.34" y2="1412.95"/><line x1="-2157.55" y1="-107.93" x2="1291.89" y2="1423.96"/><line x1="-2181.99" y1="-96.92" x2="1267.45" y2="1434.97"/><line x1="-2206.44" y1="-85.91" x2="1243.00" y2="1445.98"/><line x1="-2255.33" y1="-63.90" x2="1194.11" y2="1467.99"/><line x1="-2279.77" y1="-52.89" x2="1169.66" y2="1479.00"/><line x1="-2304.22" y1="-41.88" x2="1145.22" y2="1490.01"/><line x1="-2328.66" y1="-30.87" x2="1120.77" y2="1501.02"/><line x1="-2377.56" y1="-8.85" x2="1071.88" y2="1523.04"/><line x1="-2402.00" y1="2.16" x2="1047.44" y2="1534.05"/><line x1="-2426.45" y1="13.17" x2="1022.99" y2="1545.05"/><line x1="-2450.89" y1="24.17" x2="998.55" y2="1556.06"/><line x1="-2499.78" y1="46.19" x2="949.66" y2="1578.08"/><line x1="-2524.23" y1="57.20" x2="925.21" y2="1589.09"/><line x1="-2548.67" y1="68.21" x2="900.76" y2="1600.10"/><line x1="-2573.12" y1="79.22" x2="876.32" y2="1611.11"/><line x1="853.30" y1="-1001.05" x2="-2569.06" y2="540.19"/><line x1="877.94" y1="-990.11" x2="-2544.42" y2="551.13"/><line x1="902.58" y1="-979.16" x2="-2519.78" y2="562.07"/><line x1="927.22" y1="-968.22" x2="-2495.14" y2="573.01"/><line x1="976.50" y1="-946.34" x2="-2445.86" y2="594.90"/><line x1="1001.14" y1="-935.40" x2="-2421.22" y2="605.84"/><line x1="1025.77" y1="-924.45" x2="-2396.59" y2="616.78"/><line x1="1050.41" y1="-913.51" x2="-2371.95" y2="627.72"/><line x1="1099.69" y1="-891.63" x2="-2322.67" y2="649.61"/><line x1="1124.33" y1="-880.69" x2="-2298.03" y2="660.55"/><line x1="1148.97" y1="-869.74" x2="-2273.39" y2="671.49"/><line x1="1173.61" y1="-858.80" x2="-2248.75" y2="682.43"/><line x1="1222.88" y1="-836.92" x2="-2199.47" y2="704.32"/><line x1="1247.52" y1="-825.97" x2="-2174.84" y2="715.26"/><line x1="1272.16" y1="-815.03" x2="-2150.20" y2="726.20"/><line x1="1296.80" y1="-804.09" x2="-2125.56" y2="737.14"/><line x1="1346.08" y1="-782.21" x2="-2076.28" y2="759.03"/><line x1="1370.72" y1="-771.26" x2="-2051.64" y2="769.97"/><line x1="1395.36" y1="-760.32" x2="-2027.00" y2="780.91"/><line x1="1420.00" y1="-749.38" x2="-2002.36" y2="791.85"/><line x1="1469.27" y1="-727.50" x2="-1953.09" y2="813.74"/><line x1="1493.91" y1="-716.55" x2="-1928.45" y2="824.68"/><line x1="1518.55" y1="-705.61" x2="-1903.81" y2="835.62"/><line x1="1543.19" y1="-694.67" x2="-1879.17" y2="846.56"/><line x1="1592.47" y1="-672.79" x2="-1829.89" y2="868.45"/><line x1="1617.11" y1="-661.84" x2="-1805.25" y2="879.39"/><line x1="1641.75" y1="-650.90" x2="-1780.61" y2="890.33"/><line x1="1666.38" y1="-639.96" x2="-1755.98" y2="901.28"/><line x1="1715.66" y1="-618.08" x2="-1706.70" y2="923.16"/><line x1="1740.30" y1="-607.13" x2="-1682.06" y2="934.10"/><line x1="1764.94" y1="-596.19" x2="-1657.42" y2="945.04"/><line x1="1789.58" y1="-585.25" x2="-1632.78" y2="955.99"/><line x1="1838.86" y1="-563.37" x2="-1583.50" y2="977.87"/><line x1="1863.49" y1="-552.42" x2="-1558.86" y2="988.81"/><line x1="1888.13" y1="-541.48" x2="-1534.23" y2="999.75"/><line x1="1912.77" y1="-530.54" x2="-1509.59" y2="1010.70"/><line x1="1962.05" y1="-508.65" x2="-1460.31" y2="1032.58"/><line x1="1986.69" y1="-497.71" x2="-1435.67" y2="1043.52"/><line x1="2011.33" y1="-486.77" x2="-1411.03" y2="1054.46"/><line x1="2035.97" y1="-475.83" x2="-1386.39" y2="1065.41"/><line x1="2085.24" y1="-453.94" x2="-1337.12" y2="1087.29"/><line x1="2109.88" y1="-443.00" x2="-1312.48" y2="1098.23"/><line x1="2134.52" y1="-432.06" x2="-1287.84" y2="1109.17"/><line x1="2159.16" y1="-421.12" x2="-1263.20" y2="1120.12"/><line x1="2208.44" y1="-399.23" x2="-1213.92" y2="1142.00"/><line x1="2233.08" y1="-388.29" x2="-1189.28" y2="1152.94"/><line x1="2257.72" y1="-377.35" x2="-1164.64" y2="1163.88"/><line x1="2282.36" y1="-366.41" x2="-1140.00" y2="1174.83"/><line x1="2331.63" y1="-344.52" x2="-1090.73" y2="1196.71"/><line x1="2356.27" y1="-333.58" x2="-1066.09" y2="1207.65"/><line x1="2380.91" y1="-322.64" x2="-1041.45" y2="1218.60"/><line x1="2405.55" y1="-311.70" x2="-1016.81" y2="1229.54"/><line x1="2454.83" y1="-289.81" x2="-967.53" y2="1251.42"/><line x1="2479.47" y1="-278.87" x2="-942.89" y2="1262.36"/><line x1="2504.10" y1="-267.93" x2="-918.25" y2="1273.31"/><line x1="2528.74" y1="-256.99" x2="-893.62" y2="1284.25"/><line x1="2578.02" y1="-235.10" x2="-844.34" y2="1306.13"/><line x1="2602.66" y1="-224.16" x2="-819.70" y2="1317.07"/><line x1="2627.30" y1="-213.22" x2="-795.06" y2="1328.02"/><line x1="2651.94" y1="-202.28" x2="-770.42" y2="1338.96"/><line x1="2701.22" y1="-180.39" x2="-721.14" y2="1360.84"/><line x1="2725.85" y1="-169.45" x2="-696.51" y2="1371.78"/><line x1="2750.49" y1="-158.51" x2="-671.87" y2="1382.73"/><line x1="2775.13" y1="-147.57" x2="-647.23" y2="1393.67"/><line x1="2824.41" y1="-125.68" x2="-597.95" y2="1415.55"/><line x1="2849.05" y1="-114.74" x2="-573.31" y2="1426.49"/><line x1="2873.69" y1="-103.80" x2="-548.67" y2="1437.44"/><line x1="2898.33" y1="-92.86" x2="-524.03" y2="1448.38"/><line x1="2947.60" y1="-70.97" x2="-474.76" y2="1470.26"/><line x1="2972.24" y1="-60.03" x2="-450.12" y2="1481.20"/><line x1="2996.88" y1="-49.09" x2="-425.48" y2="1492.15"/><line x1="3021.52" y1="-38.15" x2="-400.84" y2="1503.09"/><line x1="3070.80" y1="-16.26" x2="-351.56" y2="1524.97"/><line x1="3095.44" y1="-5.32" x2="-326.92" y2="1535.92"/><line x1="3120.08" y1="5.62" x2="-302.28" y2="1546.86"/><line x1="3144.71" y1="16.56" x2="-277.64" y2="1557.80"/><line x1="3193.99" y1="38.45" x2="-228.37" y2="1579.68"/><line x1="3218.63" y1="49.39" x2="-203.73" y2="1590.63"/><line x1="3243.27" y1="60.33" x2="-179.09" y2="1601.57"/><line x1="3267.91" y1="71.27" x2="-154.45" y2="1612.51"/></g><g stroke="#102040" stroke-width="1.1"><line x1="-153.02" y1="-1010.66" x2="3296.42" y2="521.23"/><line x1="-275.25" y1="-955.61" x2="3174.19" y2="576.28"/><line x1="-397.48" y1="-900.57" x2="3051.96" y2="631.32"/><line x1="-519.70" y1="-845.52" x2="2929.74" y2="686.37"/><line x1="-641.93" y1="-790.48" x2="2807.51" y2="741.41"/><line x1="-764.16" y1="-735.43" x2="2685.28" y2="796.46"/><line x1="-886.38" y1="-680.39" x2="2563.05" y2="851.50"/><line x1="-1008.61" y1="-625.35" x2="2440.83" y2="906.54"/><line x1="-1130.84" y1="-570.30" x2="2318.60" y2="961.59"/><line x1="-1253.07" y1="-515.26" x2="2196.37" y2="1016.63"/><line x1="-1375.29" y1="-460.21" x2="2074.15" y2="1071.68"/><line x1="-1497.52" y1="-405.17" x2="1951.92" y2="1126.72"/><line x1="-1619.75" y1="-350.13" x2="1829.69" y2="1181.76"/><line x1="-1741.97" y1="-295.08" x2="1707.46" y2="1236.81"/><line x1="-1864.20" y1="-240.04" x2="1585.24" y2="1291.85"/><line x1="-1986.43" y1="-184.99" x2="1463.01" y2="1346.90"/><line x1="-2108.66" y1="-129.95" x2="1340.78" y2="1401.94"/><line x1="-2230.88" y1="-74.91" x2="1218.56" y2="1456.98"/><line x1="-2353.11" y1="-19.86" x2="1096.33" y2="1512.03"/><line x1="-2475.34" y1="35.18" x2="974.10" y2="1567.07"/><line x1="828.66" y1="-1011.99" x2="-2593.70" y2="529.24"/><line x1="951.86" y1="-957.28" x2="-2470.50" y2="583.95"/><line x1="1075.05" y1="-902.57" x2="-2347.31" y2="638.67"/><line x1="1198.25" y1="-847.86" x2="-2224.11" y2="693.38"/><line x1="1321.44" y1="-793.15" x2="-2100.92" y2="748.09"/><line x1="1444.63" y1="-738.44" x2="-1977.73" y2="802.80"/><line x1="1567.83" y1="-683.73" x2="-1854.53" y2="857.51"/><line x1="1691.02" y1="-629.02" x2="-1731.34" y2="912.22"/><line x1="1814.22" y1="-574.31" x2="-1608.14" y2="966.93"/><line x1="1937.41" y1="-519.60" x2="-1484.95" y2="1021.64"/><line x1="2060.61" y1="-464.89" x2="-1361.75" y2="1076.35"/><line x1="2183.80" y1="-410.18" x2="-1238.56" y2="1131.06"/><line x1="2306.99" y1="-355.47" x2="-1115.37" y2="1185.77"/><line x1="2430.19" y1="-300.76" x2="-992.17" y2="1240.48"/><line x1="2553.38" y1="-246.05" x2="-868.98" y2="1295.19"/><line x1="2676.58" y1="-191.33" x2="-745.78" y2="1349.90"/><line x1="2799.77" y1="-136.62" x2="-622.59" y2="1404.61"/><line x1="2922.97" y1="-81.91" x2="-499.39" y2="1459.32"/><line x1="3046.16" y1="-27.20" x2="-376.20" y2="1514.03"/><line x1="3169.35" y1="27.51" x2="-253.01" y2="1568.74"/></g></g></g></g><path d="M5.40,353.00 L5.40,338.60 L262.87,222.76 L268.13,222.58 L273.39,222.48 L278.66,222.45 L283.94,222.48 L289.20,222.59 L294.46,222.77 L299.70,223.01 L304.93,223.33 L310.13,223.71 L315.30,224.16 L320.44,224.68 L325.55,225.27 L330.61,225.93 L335.63,226.65 L340.60,227.44 L345.52,228.29 L350.38,229.21 L355.17,230.19 L359.90,231.24 L364.55,232.34 L369.13,233.51 L373.64,234.74 L378.05,236.03 L382.39,237.37 L386.63,238.77 L390.77,240.23 L394.82,241.74 L398.77,243.31 L402.61,244.92 L406.35,246.59 L409.97,248.30 L413.48,250.06 L416.87,251.87 L420.13,253.72 L423.28,255.61 L426.30,257.55 L429.19,259.52 L431.94,261.53 L434.57,263.58 L437.05,265.66 L439.40,267.77 L441.61,269.91 L443.68,272.08 L445.60,274.27 L447.37,276.49 L449.00,278.74 L450.48,281.00 L451.81,283.28 L452.98,285.58 L454.01,287.89 L454.88,290.22 L455.60,292.56 L456.16,294.90 L456.56,297.25 L456.82,299.60 L456.91,301.96 L456.85,304.32 L456.64,306.67 L456.26,309.03 L455.74,311.37 L455.60,328.40 L449.00,331.30" stroke="#0f1b2c" stroke-width="1.3" fill="none"/><path d="M21.30,346.90 L263.42,238.09 L268.15,237.90 L272.89,237.76 L277.63,237.69 L282.38,237.67 L287.13,237.71 L291.88,237.80 L296.62,237.96 L301.34,238.17 L306.05,238.45 L310.75,238.78 L315.42,239.17 L320.06,239.61 L324.68,240.12 L329.26,240.68 L333.81,241.29 L338.32,241.96 L342.78,242.69 L347.20,243.47 L351.57,244.31 L355.89,245.20 L360.15,246.14 L364.34,247.13 L368.48,248.18 L372.55,249.27 L376.56,250.42 L380.49,251.62 L384.34,252.86 L388.12,254.15 L391.81,255.48 L395.43,256.86 L398.95,258.29 L402.39,259.76 L405.74,261.27 L408.99,262.82 L412.14,264.41 L415.20,266.03 L418.15,267.70 L421.00,269.40 L423.75,271.13 L426.38,272.90 L428.91,274.70 L431.33,276.53 L433.63,278.39 L435.82,280.28 L437.89,282.19 L439.84,284.13 L441.67,286.09 L443.38,288.07 L444.96,290.07 L446.42,292.10 L447.76,294.13 L448.97,296.19 L450.06,298.26 L451.01,300.34 L451.84,302.43 L452.54,304.53 L453.11,306.64 L453.55,308.76 L453.86,310.88 L454.03,313.00" stroke="#0f1b2c" stroke-width="1.3" fill="none"/><path d="M30.60,348.80 L268.72,242.37 L273.27,242.26 L277.82,242.21 L282.37,242.22 L286.92,242.28 L291.46,242.40 L296.00,242.57 L300.52,242.80 L305.03,243.08 L309.52,243.42 L313.98,243.82 L318.42,244.27 L322.84,244.77 L327.21,245.33 L331.56,245.94 L335.86,246.60 L340.12,247.31 L344.34,248.08 L348.51,248.90 L352.62,249.77 L356.68,250.69 L360.69,251.66 L364.63,252.68 L368.51,253.75 L372.32,254.86 L376.06,256.02 L379.73,257.23 L383.33,258.47 L386.85,259.77 L390.28,261.10 L393.64,262.48 L396.90,263.90 L400.08,265.36 L403.17,266.85 L406.17,268.39 L409.07,269.96 L411.87,271.56 L414.58,273.20 L417.18,274.87 L419.68,276.57 L422.08,278.30 L424.36,280.06 L426.54,281.85 L428.61,283.66 L430.57,285.50 L432.41,287.37 L434.14,289.25 L435.75,291.15 L437.24,293.08 L438.62,295.02 L439.88,296.97 L441.01,298.94 L442.03,300.93 L442.92,302.93 L443.69,304.93 L444.34,306.95 L444.86,308.97 L445.26,311.00 L445.54,313.03 L445.69,315.06 L445.71,317.10" stroke="#0f1b2c" stroke-width="1.3" fill="none"/><path d="M5.40,353.00 L202.70,441.00 L449.00,331.30" stroke="#0f1b2c" stroke-width="1.3" fill="none"/><path d="M5.4,353 L21.3,346.9" stroke="#0f1b2c" stroke-width="1.3" fill="none"/><path d="M202.75,433.90 L454.50,320.40" stroke="#1c2a3c" stroke-width="1" fill="none" clip-path="url(#cD)"/><path d="M5.40,345.90 L202.75,433.90" stroke="#1c2a3c" stroke-width="1" fill="none" clip-path="url(#cD)"/><path d="M202.75,426.8 L202.75,441" stroke="#1c2a3c" stroke-width="1" fill="none"/><path d="M5.4,341.4 L202.8,429.4 L456.3,315.8" stroke="#1c2a3c" stroke-width="0.9" fill="none" clip-path="url(#cD)"/><path d="M5.40,338.60 L202.80,426.80 L456.30,313.00" fill="none" stroke="#d0d2d3" stroke-width="1.4"/><text x="301" y="285.2" font-family="Liberation Sans" font-size="15.2" fill="none" stroke="#3c444e" stroke-width="0.55" stroke-opacity="0.85">3.00</text><path d="M64.00,365.30 L259.73,276.34 L263.31,276.21 L266.90,276.10 L270.49,276.03 L274.08,275.98 L277.67,275.97 L281.26,275.98 L284.86,276.03 L288.45,276.10 L292.03,276.21 L295.61,276.35 L299.19,276.51 L302.75,276.71 L306.31,276.94 L309.86,277.19 L313.40,277.48 L316.92,277.80 L320.43,278.14 L323.92,278.52 L327.40,278.92 L330.86,279.36 L334.31,279.82 L337.73,280.31 L341.13,280.84 L344.50,281.39 L347.86,281.96 L351.19,282.57 L354.49,283.20 L357.77,283.87 L361.01,284.56 L364.23,285.27 L367.42,286.02 L370.57,286.79 L373.70,287.58 L376.78,288.41 L379.84,289.25 L382.85,290.13 L385.83,291.03 L388.77,291.95 L391.67,292.90 L394.54,293.88 L397.35,294.87 L400.13,295.90 L402.86,296.94 L405.55,298.01 L408.20,299.10 L410.79,300.21 L413.34,301.34 L415.84,302.50 L418.30,303.67 L420.70,304.87 L423.05,306.09 L425.35,307.32 L427.60,308.58 L429.79,309.85 L431.93,311.14 L434.02,312.45 L436.05,313.78 L438.02,315.12 L439.94,316.48 L441.80,317.86" fill="none" stroke="#c6cace" stroke-width="2.2"/><path d="M5.88,394.33 L202.25,481.54 L454.19,369.37 L455.06,365.83 L455.56,362.28 L455.70,358.72 L455.48,355.15 L454.90,351.59 L453.95,348.05 L452.65,344.53 L450.99,341.03 L448.98,337.57 L446.62,334.16 L443.92,330.77 L440.88,327.36 L437.50,324.02 L433.81,320.75 L429.79,317.56 L425.47,314.47 L420.85,311.47 L415.93,308.57 L410.74,305.78 L405.27,303.10 L399.55,300.55 L393.59,298.12 L387.38,295.82 L380.96,293.65 L374.33,291.63 L367.51,289.75 L360.50,288.04 L353.33,286.49 L346.01,285.07 L338.55,283.81 L330.98,282.71 L323.30,281.75 L315.53,280.96 L307.68,280.32 L299.79,279.84 L291.85,279.53 L283.89,279.37 L275.92,279.38 L267.96,279.55 L260.02,279.88 Z" fill="none" stroke="#2c6bd2" stroke-width="2.7"/><path d="M20.80,394.31 L202.19,474.87 L444.16,367.14 L444.80,363.89 L445.12,360.62 L445.11,357.35 L444.78,354.08 L444.12,350.82 L443.15,347.58 L441.85,344.35 L440.23,341.16 L438.30,337.99 L436.06,334.87 L433.51,331.79 L430.67,328.69 L427.52,325.64 L424.08,322.65 L420.37,319.74 L416.37,316.91 L412.11,314.17 L407.59,311.52 L402.82,308.96 L397.81,306.51 L392.56,304.16 L387.10,301.92 L381.42,299.80 L375.55,297.80 L369.49,295.93 L363.25,294.18 L356.85,292.56 L350.30,291.08 L343.61,289.73 L336.80,288.54 L329.88,287.49 L322.85,286.58 L315.75,285.80 L308.58,285.17 L301.35,284.68 L294.08,284.33 L286.78,284.13 L279.47,284.07 L272.16,284.16 L264.87,284.40 Z" fill="none" stroke="#2c6bd2" stroke-width="2.7"/><line x1="456.10" y1="368.60" x2="483.50" y2="356.30" stroke="#88e888" stroke-width="1.4"/><path d="M259.5,334.5 C270,352 288,366 300,378 C306,384 310,388 316,391" fill="none" stroke="#5e6874" stroke-width="0.9"/><path d="M316,391 C330,397 350,396 373,383" fill="none" stroke="#a9b0b8" stroke-width="1.1"/><path d="M338,365 C352,361 362,357 370,352" fill="none" stroke="#b8c2cc" stroke-width="1.2"/><ellipse cx="314.3" cy="388.4" rx="6" ry="10.5" fill="#8d949b" fill-opacity="0.55" stroke="#757c84" stroke-width="0.8" stroke-opacity="0.6"/><circle cx="314.3" cy="389" r="1.4" fill="#3a4048"/><ellipse cx="314.8" cy="342.6" rx="62" ry="27.6" fill="none" stroke="#2f6fd7" stroke-width="2.8"/><ellipse cx="314.8" cy="342.6" rx="59.2" ry="26.2" fill="none" stroke="#3273d6" stroke-width="2.6"/><circle cx="314.9" cy="342.1" r="3.4" fill="#c9d8ee" stroke="#48566a" stroke-width="0.9"/><circle cx="274.7" cy="357.9" r="3.4" fill="#c9d8ee" stroke="#48566a" stroke-width="0.9"/><circle cx="279.6" cy="357" r="3.4" fill="#c9d8ee" stroke="#48566a" stroke-width="0.9"/><circle cx="414.3" cy="291.4" r="3.4" fill="#c9d8ee" stroke="#48566a" stroke-width="0.9"/><circle cx="429.1" cy="296.8" r="3.4" fill="#c9d8ee" stroke="#48566a" stroke-width="0.9"/><line x1="416.8" y1="292.6" x2="426.5" y2="295.8" stroke="#3aa0e8" stroke-width="1.4"/><circle cx="314.9" cy="342.1" r="3.3" fill="#c9d8ee" stroke="#48566a" stroke-width="0.9"/><circle cx="279.6" cy="357" r="3.3" fill="#c9d8ee" stroke="#48566a" stroke-width="0.9"/><circle cx="414.3" cy="291.4" r="3.3" fill="#c9d8ee" stroke="#48566a" stroke-width="0.9"/><circle cx="429.1" cy="296.8" r="3.3" fill="#c9d8ee" stroke="#48566a" stroke-width="0.9"/><line x1="315" y1="286.5" x2="315" y2="298" stroke="#1a2433" stroke-width="1.2"/><ellipse cx="226.5" cy="470.5" rx="7" ry="3.6" fill="#d8d8d8" fill-opacity="0.7"/><circle cx="227.2" cy="469.8" r="2.5" fill="none" stroke="#6f52c8" stroke-width="1.4"/><path d="M310.7,299.5 L320.6,299.5 L320.6,311.5 L327.7,311.5 L315.6,327.1 L303.6,311.5 L310.7,311.5 Z" fill="#1a93d8" stroke="#fff" stroke-width="1.6"/></svg><div class="abs" style="left:0;top:0;width:777px;height:2px;background:#d9d9d9"></div>
<div class="abs" style="left:0;top:2px;width:777px;height:1px;background:#f4f4f4"></div>
<!-- top-left panels -->
<div class="abs" style="left:-1px;top:7px;width:116px;height:24px;background:#f0f0f0;border:1px solid #c3c3c3"></div>
<svg class="abs" style="left:94px;top:14px" width="12" height="12"><circle cx="5.6" cy="5.3" r="4.7" fill="#252525"/><rect x="2.8" y="4.5" width="5.6" height="1.7" fill="#f0f0f0"/></svg>
<div class="abs" style="left:0;top:37px;width:81px;height:20px;background:#efefef"></div>
<div class="abs" style="left:0;top:39px;width:35px;height:16px;background:#8d8d8d"></div>
<div class="abs" style="left:-16px;top:39px;width:39px;height:16px;color:#fff;font-size:11px;font-weight:bold;line-height:16px;text-align:right;white-space:nowrap">0 v20</div>
<svg class="abs" style="left:36px;top:38px" width="40" height="18"><circle cx="8.8" cy="8.9" r="6.8" fill="#e58d1c"/><text x="8.6" y="12.6" font-family="Liberation Sans" font-size="10" font-weight="bold" fill="#fff" text-anchor="middle">E</text><rect x="11.6" y="11.6" width="4.3" height="4.3" fill="#fff" stroke="#111" stroke-width="1"/><circle cx="30.4" cy="9.2" r="5.7" fill="none" stroke="#222" stroke-width="1.2"/><circle cx="30.4" cy="9.2" r="2.2" fill="#222"/></svg>
<div class="abs" style="left:0;top:61px;width:4px;height:20px;background:#ececec"></div>
<!-- labels -->
<div class="abs" style="left:0;top:277px;width:45px;height:20px;background:#efefef"></div>
<div class="abs" style="left:0;top:301px;width:45px;height:19.5px;background:#efefef"></div>
<div class="abs" style="left:0;top:281px;font-size:10.7px;color:#333;white-space:nowrap;line-height:12px">teeth):1</div>
<div class="abs" style="left:0;top:304.6px;font-size:10.7px;color:#333;white-space:nowrap;line-height:12px">teeth):1</div>
<!-- bottom-left -->
<div class="abs" style="left:0;top:501px;width:115px;height:24px;background:#efefef;border-right:1px solid #cfcfcf"></div>
<svg class="abs" style="left:94px;top:508px" width="12" height="12"><circle cx="5.6" cy="5.7" r="4.7" fill="#252525"/><rect x="2.8" y="4.9" width="5.6" height="1.6" fill="#f0f0f0"/><rect x="4.8" y="2.9" width="1.6" height="5.6" fill="#f0f0f0"/></svg>
<!-- bottom toolbar -->
<div class="abs" style="left:177px;top:500px;width:237px;height:23px;background:#f0f0f0"></div>
<div class="abs" style="left:655.5px;top:508px;font-size:11.6px;font-weight:bold;color:#2b2b2b;white-space:nowrap;line-height:12px">Multiple selections</div>
<!-- panel -->
<div class="abs" style="left:524px;top:96px;width:248px;height:371px;background:#f0f0f0;border:1px solid #c6c6c6"></div>
<div class="abs" style="left:525px;top:120px;width:248px;height:1px;background:#d2d2d2"></div>
<svg class="abs" style="left:535px;top:103px" width="12" height="12"><circle cx="5.6" cy="5.3" r="4.7" fill="#2a2a2a"/><rect x="2.9" y="4.5" width="5.4" height="1.6" fill="#f0f0f0"/></svg>
<div class="abs" style="left:549px;top:102px;font-size:11px;letter-spacing:-0.85px;color:#4d4d4d;white-space:nowrap;line-height:12px">EDIT FEATURE</div>
<svg class="abs" style="left:758px;top:105px" width="12" height="8"><path d="M0.8,0.6 L5.2,3.4 L0.8,6.6 Z M5.6,0.6 L10,3.4 L5.6,6.6 Z" fill="#222"/></svg>
<div class="lbl" style="top:130px">Type</div>
<div class="lbl" style="top:160px">Profiles</div>
<div class="lbl" style="top:190px">Start</div>
<div class="lbl" style="top:220px">Object</div>
<div class="lbl" style="top:250px">Offset</div>
<div class="lbl" style="top:280px">Direction</div>
<div class="lbl" style="top:310px">Extent Type</div>
<div class="lbl" style="top:340px">Distance</div>
<div class="lbl" style="top:370px">Taper Angle</div>
<div class="lbl" style="top:410px">Operation</div>
<div class="abs" style="left:525px;top:336px;width:16px;height:20px;background:#f0f0f0"></div>
<svg class="abs" style="left:527px;top:338px" width="8" height="16"><circle cx="3.5" cy="2.5" r="1.3" fill="#9a9a9a"/><circle cx="3.5" cy="7.5" r="1.3" fill="#9a9a9a"/><circle cx="3.5" cy="12.5" r="1.3" fill="#9a9a9a"/></svg>
<!-- type icons -->
<div class="abs" style="left:609.5px;top:122.5px;width:23px;height:26.5px;background:#0696d7;border-radius:2px"></div>
<svg class="abs" style="left:610px;top:124px" width="60" height="24">
 <path d="M3,6 L6,3 L14,3 L14,16 L11,19 L3,19 Z" fill="#9fd4f8"/><path d="M3,6 L6,3 L14,3 L11,6 Z" fill="#d6efff"/><path d="M11,6 L14,3 L14,16 L11,19 Z" fill="#6cb8ea"/>
 <path d="M3,20 L11,20 L14,17" fill="none" stroke="#f2e8d8" stroke-width="1.2"/>
 <path d="M17.5,18 L17.5,5 M15.8,7 L17.5,4 L19.2,7" stroke="#fff" stroke-width="1.3" fill="none"/>
 <path d="M31.9,6.5 L34.5,3.9 L43.9,3.9 L41.5,6.5 Z" fill="#8cc8f2"/>
 <path d="M31.9,6.5 L41.5,6.5 L41.5,16.9 L38.6,16.9 L38.6,15.2 L34.9,15.2 L34.9,16.9 L31.9,16.9 Z" fill="#5aa6e2"/>
 <path d="M41.5,6.5 L43.9,3.9 L43.9,14.6 L41.5,16.9 Z" fill="#3f8fd2"/>
 <path d="M34.6,7 L34.6,15 M38.8,7 L38.8,15" stroke="#7fbcec" stroke-width="0.8"/>
 <path d="M32,18.4 L35,16.6 L38.4,18.4 L41.6,18.4 L43.9,16.2" fill="none" stroke="#aaaaaa" stroke-width="1.1"/>
 <path d="M46.3,17 L46.3,6 M44.6,7.6 L46.3,4.6 L48,7.6" stroke="#222" stroke-width="1.3" fill="none"/>
</svg>
<!-- profiles -->
<div class="abs" style="left:609.5px;top:152.5px;width:78px;height:26.5px;background:#0696d7;border-radius:2px"></div>
<svg class="abs" style="left:616px;top:157px" width="12" height="18"><path d="M1.5,1 L1.5,13.5 L4.5,10.8 L7,16 L9,15 L6.6,9.8 L10.5,9.5 Z" fill="#fff" stroke="#555" stroke-width="0.9"/></svg>
<div class="abs" style="left:631.5px;top:160px;font-size:11px;color:#fff;white-space:nowrap;line-height:12px">4 selected</div>
<svg class="abs" style="left:697px;top:160px" width="12" height="12"><path d="M2,2 L9.5,9.5 M9.5,2 L2,9.5" stroke="#4d4d4d" stroke-width="1.9"/></svg>
<!-- start -->
<div class="box dd" style="top:182.5px;height:26.5px"></div>
<svg class="abs" style="left:612px;top:186px" width="20" height="18"><path d="M2.2,1.5 L2.2,16 L8.5,16" fill="none" stroke="#1b2a5a" stroke-width="1.8"/><path d="M8.5,1.5 L8.5,4" stroke="#1b2a5a" stroke-width="1.8"/><path d="M8.5,5 L8.5,12.5" stroke="#e0191e" stroke-width="1.8"/><path d="M9.5,9 L15.5,9 M13,6.8 L15.8,9 L13,11.2" fill="none" stroke="#222" stroke-width="1.1"/></svg>
<div class="abs txt" style="left:633px;top:190px">Object</div>
<svg class="abs arrow" style="left:730px;top:194px" width="7" height="4"><path d="M0,0 L6,0 L3,3.8 Z" fill="#222"/></svg>
<!-- object -->
<div class="box" style="top:212.5px;width:77px;height:26.5px"></div>
<svg class="abs" style="left:616px;top:217px" width="12" height="18"><path d="M1.5,1 L1.5,13.5 L4.5,10.8 L7,16 L9,15 L6.6,9.8 L10.5,9.5 Z" fill="#fff" stroke="#666" stroke-width="0.9"/></svg>
<div class="abs txt" style="left:631.5px;top:220px">1 selected</div>
<svg class="abs" style="left:697px;top:220px" width="12" height="12"><path d="M2,2 L9.5,9.5 M9.5,2 L2,9.5" stroke="#4d4d4d" stroke-width="1.9"/></svg>
<!-- offset -->
<div class="box inp" style="top:243px;height:25.5px"></div>
<div class="abs txt" style="left:613.5px;top:250px">0.00 mm</div>
<!-- direction -->
<div class="box dd" style="top:273px;height:26px"></div>
<svg class="abs" style="left:612px;top:276px" width="20" height="20"><path d="M8,1.5 L16.5,4.5 L12.5,11 L9,9 Z" fill="#f3a77a" stroke="#e9915a" stroke-width="0.6"/><path d="M2.5,16 L11,7.5" stroke="#666" stroke-width="1.2"/><path d="M2,12.8 L2,16.6 L5.8,16.6" fill="none" stroke="#666" stroke-width="1.2"/></svg>
<div class="abs txt" style="left:633px;top:280px">One Side</div>
<svg class="abs arrow" style="left:730px;top:284px" width="7" height="4"><path d="M0,0 L6,0 L3,3.8 Z" fill="#222"/></svg>
<!-- extent -->
<div class="box dd" style="top:303px;height:26px"></div>
<svg class="abs" style="left:612px;top:307px" width="20" height="18"><path d="M2,1 L2,16 M15,1 L15,16" stroke="#1b2a5a" stroke-width="1.8"/><path d="M4,8.5 L13,8.5 M6,6.5 L3.8,8.5 L6,10.5 M11,6.5 L13.2,8.5 L11,10.5" fill="none" stroke="#222" stroke-width="1.1"/></svg>
<div class="abs txt" style="left:633px;top:310px">Distance</div>
<svg class="abs arrow" style="left:730px;top:314px" width="7" height="4"><path d="M0,0 L6,0 L3,3.8 Z" fill="#222"/></svg>
<!-- distance -->
<div class="box inp" style="top:333px;height:25.5px"></div>
<div class="abs txt" style="left:613.5px;top:340px">-3.00 mm</div>
<!-- taper -->
<div class="box inp" style="top:363px;height:25.5px"></div>
<div class="abs txt" style="left:613.5px;top:370px">0.0 deg</div>
<div class="abs" style="left:526px;top:396px;width:234px;height:1px;background:#cfcfcf"></div>
<!-- operation -->
<div class="box dd" style="top:403px;height:26px"></div>
<svg class="abs" style="left:613px;top:407px" width="16" height="17"><rect x="4.5" y="1.5" width="8" height="7" fill="#8cc0ec" stroke="#4a8fd3" stroke-width="1"/><rect x="1.5" y="7" width="13.5" height="8.5" fill="#5b9fe0" stroke="#3f84c9" stroke-width="1"/></svg>
<div class="abs txt" style="left:633px;top:410px">Join</div>
<svg class="abs arrow" style="left:730px;top:414px" width="7" height="4"><path d="M0,0 L6,0 L3,3.8 Z" fill="#222"/></svg>
<div class="abs" style="left:525px;top:431.5px;width:248px;height:1px;background:#d0d0d0"></div>
<svg class="abs" style="left:532px;top:444px" width="14" height="14"><circle cx="6.9" cy="6.6" r="5.6" fill="#111"/><rect x="6.1" y="5.4" width="1.7" height="4.6" fill="#fff"/><circle cx="6.95" cy="3.7" r="1" fill="#fff"/></svg>
<div class="btn" style="left:632.3px;width:59.5px">OK</div>
<div class="btn" style="left:702.4px;width:59.5px;color:#4a4a4a">Cancel</div>
<!-- view cube -->
<svg class="abs" style="left:688px;top:14px" width="89" height="68">
 <g transform="translate(-688,-14)">
  <path d="M730.2,21.8 L706.1,35.4 L704.9,65.7 L730.8,75.6 L756.2,65.7 L754.4,35.4 Z" fill="#e4e4e4" fill-opacity="0.62"/>
  <path d="M730.2,21.8 L730.2,55.8 L704.9,65.7 M730.2,55.8 L756.2,65.7" fill="none" stroke="#8c8c8c" stroke-width="0.9" stroke-dasharray="3,2.5"/>
  <path d="M730.2,21.8 L706.1,35.4 L704.9,65.7 M730.2,21.8 L754.4,35.4 L756.2,65.7" fill="none" stroke="#8c8c8c" stroke-width="0.9" stroke-dasharray="3,2.5"/>
  <text x="0" y="0" font-family="Liberation Sans" font-size="7.5" font-weight="bold" fill="#9a9a9a" transform="translate(710,49) rotate(-24) scale(0.85,1.2)">RIGHT</text>
  <text x="0" y="0" font-family="Liberation Sans" font-size="7.5" font-weight="bold" fill="#9a9a9a" transform="translate(735,39) rotate(24) scale(0.75,1.2)">BACK</text>
  <path d="M715,63 C720,58 724,62 728,60 C733,62 737,64 742,66 M722,68 C728,66 733,70 740,70" fill="none" stroke="#8a8a8a" stroke-width="0.8"/>
  <line x1="699.9" y1="65.7" x2="730.8" y2="75.6" stroke="#f26666" stroke-width="2.6"/>
  <line x1="730.8" y1="75.6" x2="762.4" y2="65.7" stroke="#80e880" stroke-width="2.6"/>
  <text x="690.5" y="68.5" font-family="Liberation Sans" font-size="10" fill="#f28c8c">X</text>
  <text x="762.5" y="68" font-family="Liberation Sans" font-size="10" fill="#8ce88c">Y</text>
 </g>
</svg>
<!-- dimension input -->
<div class="abs" style="left:435px;top:335px;width:90px;height:21.5px;background:#eeeeee"></div>
<svg class="abs" style="left:437px;top:337px" width="12" height="18"><path d="M3,1 L5,3 L3,5 L5,7 L3,9 L5,11 L3,13 L5,15 L3,17" fill="none" stroke="#bdbdbd" stroke-width="0.9"/><rect x="8.3" y="0" width="1.3" height="18" fill="#d2d2d2"/></svg>
<div class="abs" style="left:449px;top:336.4px;width:69px;height:19.3px;background:#fff;border:1px solid #c9c9c9;box-sizing:border-box"></div>
<div class="abs" style="left:461.2px;top:339.2px;width:43.6px;height:12.8px;background:#0a6bd6;overflow:hidden"><span style="position:absolute;left:0.3px;top:-0.5px;font-size:12.8px;letter-spacing:-0.5px;line-height:13px;color:#fff;white-space:nowrap">-3.00 mm</span></div>
<!-- toolbar icons -->
<svg class="abs" style="left:177px;top:500px" width="237" height="24">
 <g transform="translate(-177,-500)">
  <path d="M186.9,518.8 L186.9,507 L185.2,507 L188.4,503.6 L191.6,507 L189.9,507 L189.9,518.8 Z" fill="#fff" stroke="#333" stroke-width="0.9"/>
  <path d="M183.6,514.4 C181,513.5 180.5,511 184,510.3 C188,509.5 195,510 196.2,512 C197,514 193,515 190.5,515.2" fill="none" stroke="#333" stroke-width="1.1"/>
  <path d="M186,515.4 L182.5,515.4 M184.2,513.6 L182.3,515.4 L184.2,517.2" fill="none" stroke="#333" stroke-width="1.1"/>
  <path d="M201.2,510.5 L206.8,510.5 L204,513.8 Z" fill="#333"/>
  <path d="M213.8,509.8 L228.6,509.8 L228.6,519.2 L213.8,519.2 Z" fill="#eeeeee" stroke="#3a3f46" stroke-width="1.3"/>
  <rect x="216.5" y="512.3" width="9.4" height="4.2" fill="#a7aebb" stroke="#3a3f46" stroke-width="0.8"/>
  <path d="M215.5,509.5 L219.8,504.8 L221,507.5 L226.5,505 L227,509.5" fill="#d7d7d7" stroke="#3a3f46" stroke-width="0.9"/>
  <path d="M243,518.5 C240.5,515.5 239.2,512 239.8,510.8 C240.6,509.6 242.2,511 243.2,512.5 L243.2,506 C243.2,504.5 245.2,504.5 245.3,506 L245.4,510.5 L245.6,504.8 C245.7,503.3 247.7,503.3 247.7,504.8 L247.8,510.5 L248.2,505.3 C248.3,503.8 250.2,503.9 250.2,505.4 L250.2,511 L251.6,507.2 C252,505.9 253.8,506.3 253.5,507.6 L252.5,513 C252,516 251,518 250,519.2 Z" fill="#f4f4f4" stroke="#333" stroke-width="0.9"/>
  <circle cx="269.3" cy="510.8" r="4.3" fill="#d9eaf3" stroke="#2c3136" stroke-width="1.3"/>
  <path d="M272.4,514 L277,518.3" stroke="#2c3136" stroke-width="2.2"/>
  <path d="M276.3,507.2 L281,507.2 M278.65,504.9 L278.65,509.5 M276.3,510.7 L281,510.7" stroke="#2c3136" stroke-width="1"/>
  <circle cx="297.3" cy="510.5" r="5.8" fill="#f2f2f2" stroke="#2c3136" stroke-width="1.4"/>
  <rect x="294.3" y="507.6" width="6" height="5.8" fill="#dfe3ee" stroke="#2c3136" stroke-width="0.9"/>
  <path d="M301.4,514.6 L306,519" stroke="#2c3136" stroke-width="2.3"/>
  <path d="M312.3,510.5 L317.9,510.5 L315.1,513.8 Z" fill="#333"/>
  <rect x="324.8" y="504.8" width="14.6" height="11.4" rx="1.2" fill="#eee" stroke="#2f3338" stroke-width="1"/>
  <rect x="326.6" y="506.6" width="11" height="7.6" fill="#9ec0e6" stroke="#2f3338" stroke-width="0.7"/>
  <path d="M330.2,516.4 L329,519.2 L335.4,519.2 L334.2,516.4" fill="#eee" stroke="#2f3338" stroke-width="0.9"/>
  <path d="M342.5,510.5 L348.1,510.5 L345.3,513.8 Z" fill="#333"/>
  <rect x="355.5" y="504.6" width="15" height="14.6" rx="1" fill="#3d4045"/>
  <g fill="#fff">
   <rect x="357.2" y="506.3" width="1.9" height="1.9"/><rect x="360.1" y="506.3" width="1.9" height="1.9"/><rect x="363" y="506.3" width="1.9" height="1.9"/><rect x="365.9" y="506.3" width="1.9" height="1.9"/>
   <rect x="357.2" y="509.2" width="1.9" height="1.9"/><rect x="360.1" y="509.2" width="1.9" height="1.9"/><rect x="363" y="509.2" width="1.9" height="1.9"/><rect x="365.9" y="509.2" width="1.9" height="1.9"/>
  </g>
  <g fill="#c8c8c8">
   <rect x="357.2" y="512.1" width="1.9" height="1.9"/><rect x="360.1" y="512.1" width="1.9" height="1.9"/><rect x="363" y="512.1" width="1.9" height="1.9"/><rect x="365.9" y="512.1" width="1.9" height="1.9"/>
   <rect x="357.2" y="515" width="1.9" height="1.9"/><rect x="360.1" y="515" width="1.9" height="1.9"/><rect x="363" y="515" width="1.9" height="1.9"/><rect x="365.9" y="515" width="1.9" height="1.9"/>
  </g>
  <path d="M373.4,510.5 L379,510.5 L376.2,513.8 Z" fill="#333"/>
  <rect x="386.4" y="505.2" width="14.2" height="12.4" rx="1" fill="#2b4f86"/>
  <rect x="387.8" y="506.6" width="5.2" height="4.2" fill="#a9c4e8"/><rect x="394" y="506.6" width="5.2" height="4.2" fill="#a9c4e8"/>
  <rect x="387.8" y="512" width="5.2" height="4.2" fill="#a9c4e8"/><rect x="394" y="512" width="5.2" height="4.2" fill="#a9c4e8"/>
  <path d="M404.3,510.5 L409.9,510.5 L407.1,513.8 Z" fill="#333"/>
 </g>
</svg>
</body></html>
